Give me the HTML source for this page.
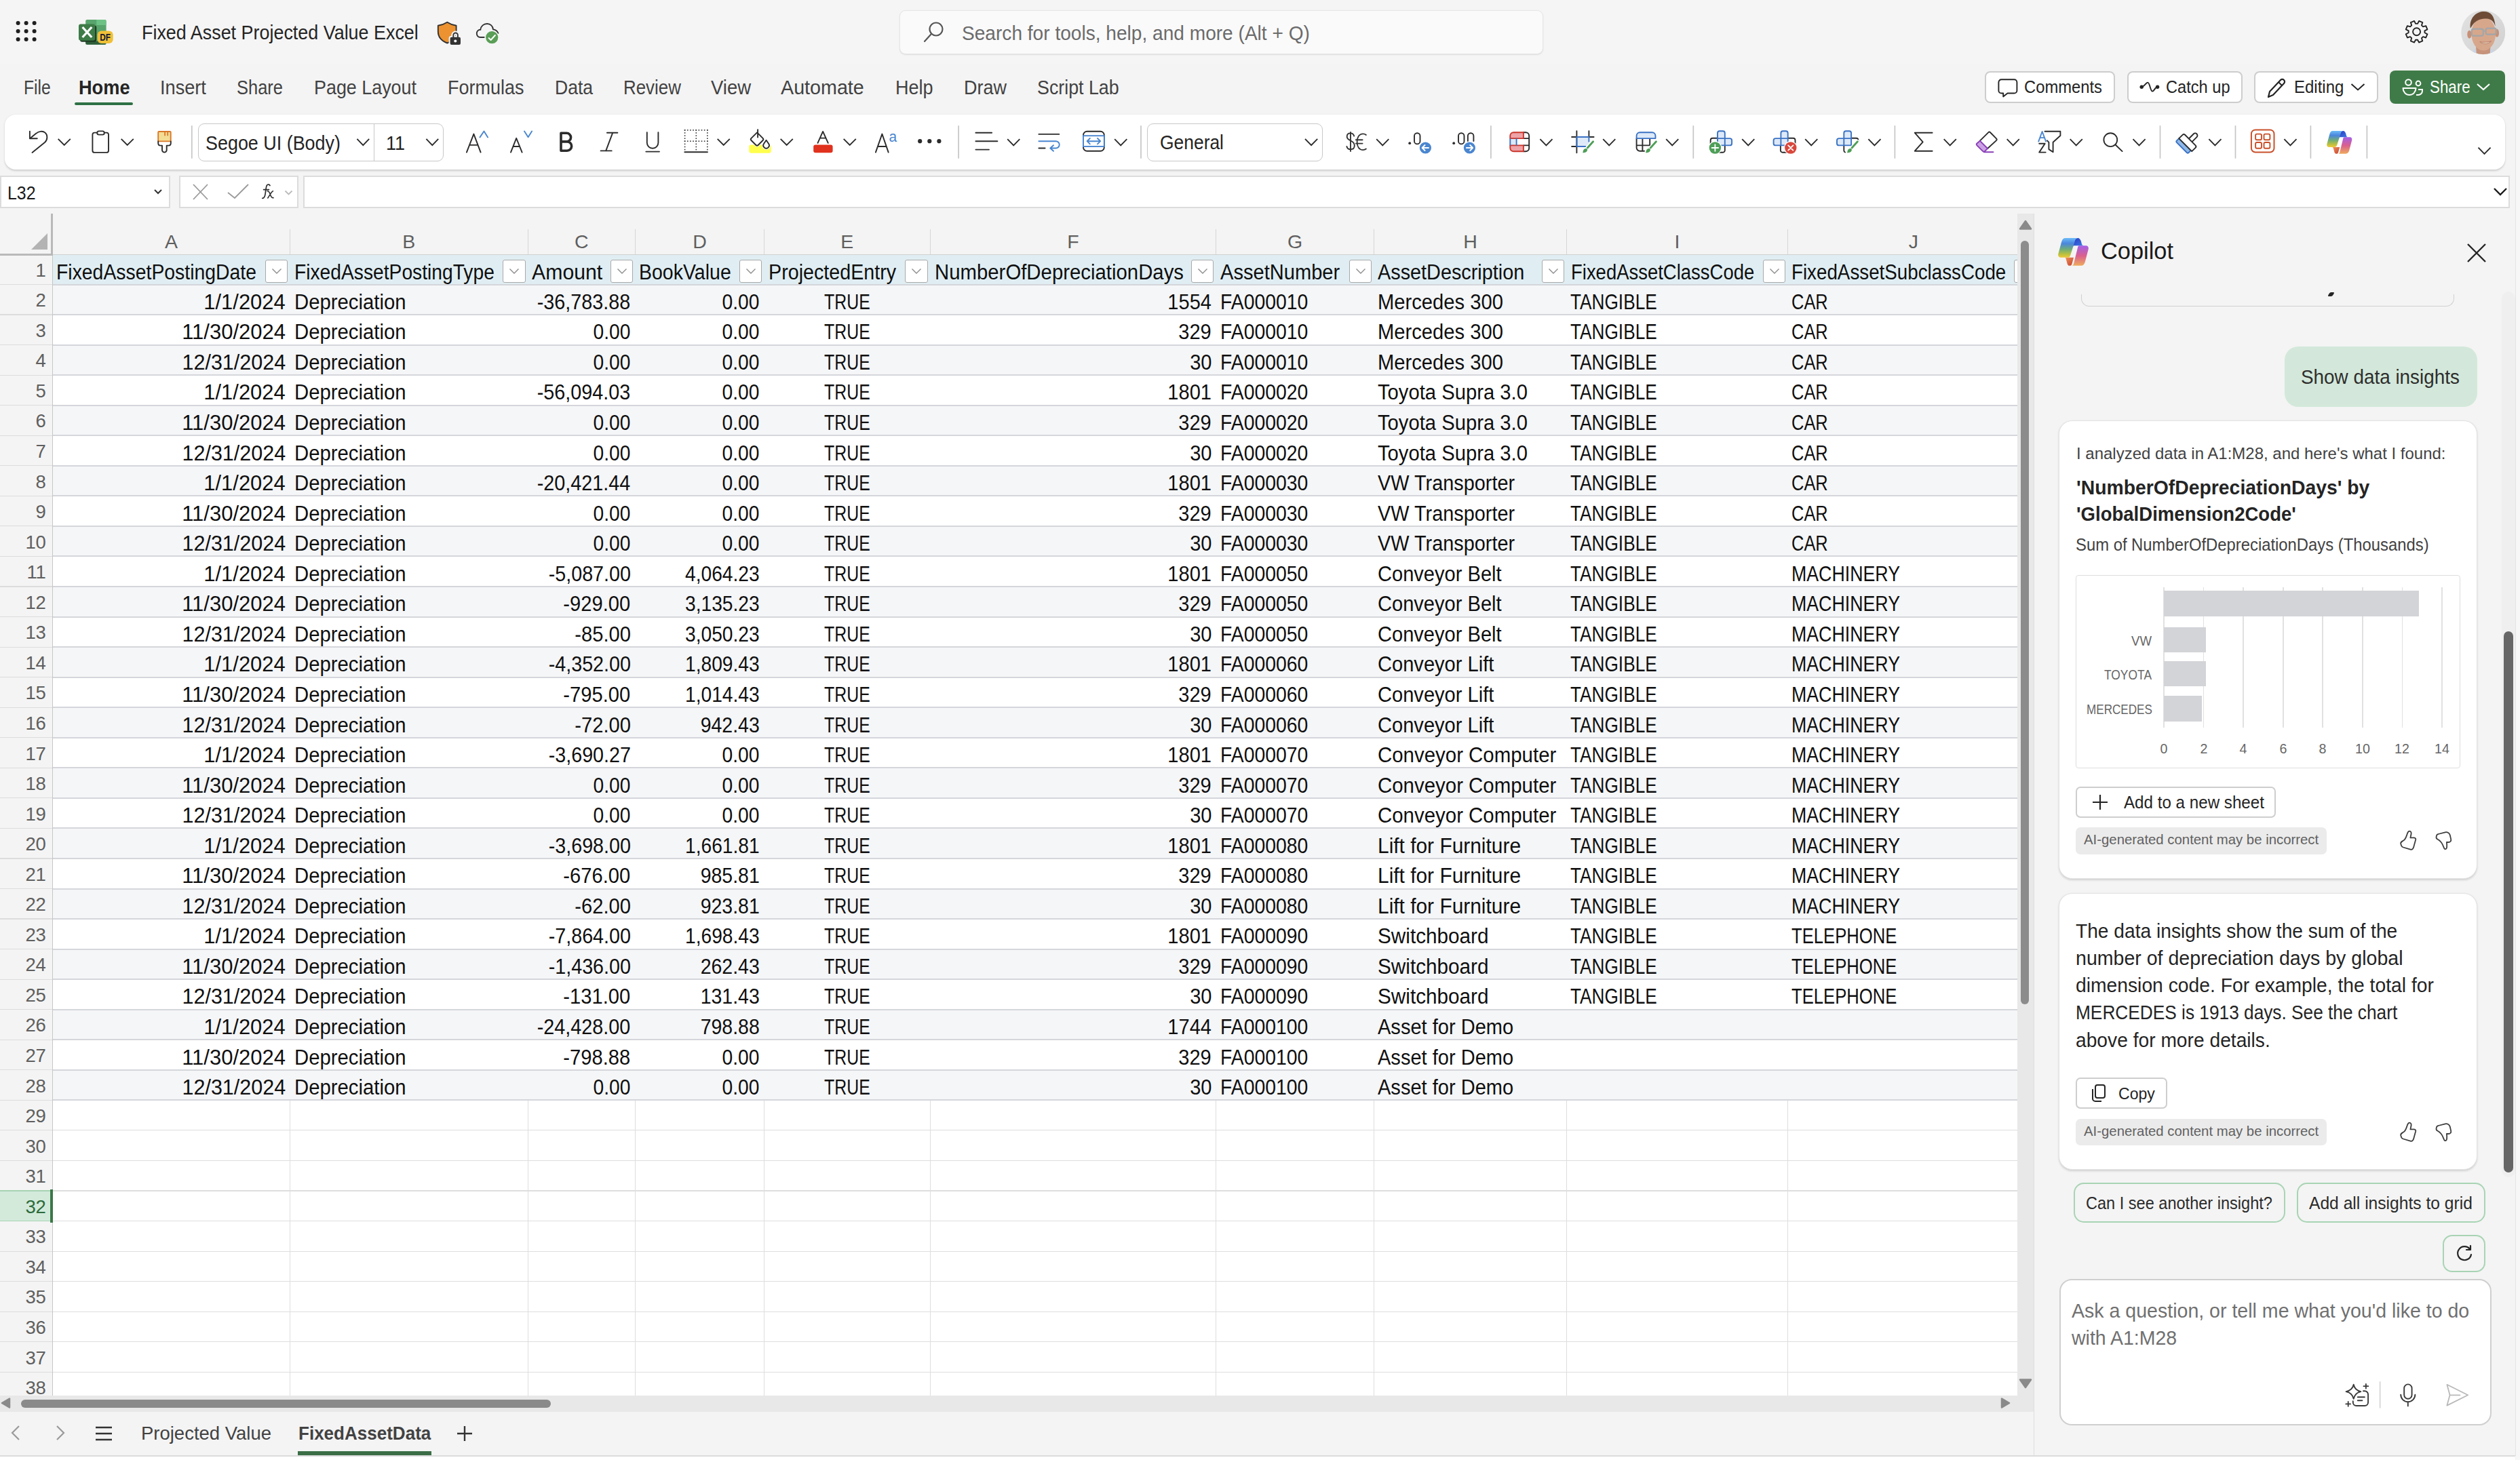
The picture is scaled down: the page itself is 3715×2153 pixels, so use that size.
<!DOCTYPE html><html><head><meta charset="utf-8"><style>
html,body{margin:0;padding:0;}
body{width:3715px;height:2153px;position:relative;overflow:hidden;background:#f4f4f4;font-family:"Liberation Sans", sans-serif;}
.t{position:absolute;white-space:pre;}
.r{position:absolute;}
</style></head><body><div class="r" style="left:0.00px;top:0.00px;width:3708.00px;height:95.00px;background:#f5f5f5;"></div><svg class="r" style="left:0.00px;top:0.00px;" width="80.00" height="95.00" viewBox="0 0 80 95" fill="none"><circle cx="26.6" cy="34" r="3.0" fill="#1f1f1f"/><circle cx="26.6" cy="46" r="3.0" fill="#1f1f1f"/><circle cx="26.6" cy="58" r="3.0" fill="#1f1f1f"/><circle cx="38.6" cy="34" r="3.0" fill="#1f1f1f"/><circle cx="38.6" cy="46" r="3.0" fill="#1f1f1f"/><circle cx="38.6" cy="58" r="3.0" fill="#1f1f1f"/><circle cx="50.6" cy="34" r="3.0" fill="#1f1f1f"/><circle cx="50.6" cy="46" r="3.0" fill="#1f1f1f"/><circle cx="50.6" cy="58" r="3.0" fill="#1f1f1f"/></svg><svg class="r" style="left:112.00px;top:26.00px;" width="58.00" height="44.00" viewBox="0 0 58 44" fill="none">
<rect x="14.2" y="3" width="30.4" height="36.8" rx="2.2" fill="#58a46d"/>
<path d="M30.2 3 h12.2 a2.2 2.2 0 0 1 2.2 2.2 v5.9 h-14.4 z" fill="#6cc285"/>
<path d="M14.2 34.7 h30.4 v2.9 a2.2 2.2 0 0 1 -2.2 2.2 h-26 a2.2 2.2 0 0 1 -2.2 -2.2 z" fill="#2f5e3a"/>
<rect x="6" y="11.4" width="24.2" height="24.3" rx="3" fill="#1d3a22"/>
<rect x="4" y="9.4" width="24.2" height="24.3" rx="3" fill="#3d7b47"/>
<path d="M9.6 14 L23.2 29 M23.2 14 L9.6 29" stroke="#fff" stroke-width="3.3"/>
<rect x="31.6" y="19.6" width="23.1" height="18.4" rx="6" fill="#f0c038"/>
<text x="43.2" y="33.6" font-family="Liberation Sans" font-size="13.8" font-weight="700" fill="#141a33" text-anchor="middle" transform="translate(43.2,0) scale(0.86,1) translate(-43.2,0)">DF</text>
</svg><div class="t" style="top:34.28px;font-size:29.2px;line-height:29.2px;color:#242424;font-weight:400;left:209.00px;transform:scaleX(0.9219);transform-origin:left;">Fixed Asset Projected Value Excel</div><svg class="r" style="left:600px;top:20px" width="150" height="56" viewBox="600 20 150 56" fill="none">
<path d="M659.3 32.7 C655 35.5 650.5 37 645.8 37.8 V46.5 C645.8 55 651.5 60.5 659.3 63.5 C667 60.5 672.6 55 672.6 46.5 V37.8 C668 37 663.6 35.5 659.3 32.7 Z" fill="#ec9230" stroke="#333" stroke-width="1.9" stroke-linejoin="round"/>
<rect x="661.6" y="52.8" width="19.4" height="15.2" rx="4" fill="#f5f5f5"/><path d="M668.3 55 V51.8 A3.3 3.3 0 0 1 674.9 51.8 V55" stroke="#f5f5f5" stroke-width="5.9"/>
<path d="M668.3 55 V51.8 A3.3 3.3 0 0 1 674.9 51.8 V55" stroke="#333" stroke-width="1.9"/>
<rect x="663.6" y="54.8" width="15.4" height="11.2" rx="2.2" fill="#333"/>
<circle cx="671.3" cy="60.4" r="2" fill="#fff"/>
<path d="M713.8 55 H708.2 C704.8 55 702.8 52.3 702.8 49.3 C702.8 46.2 705 43.8 708.3 43.7 C709 38.5 713 35 718.1 35 C723 35 726.6 38.4 727 43.4 C730.4 43.8 733 45.8 734.4 48.8" stroke="#333" stroke-width="1.9" stroke-linecap="round"/>
<circle cx="725.2" cy="55.2" r="10.4" fill="#f5f5f5"/>
<circle cx="725.2" cy="55.2" r="9.1" fill="#5a9e57"/>
<path d="M720.6 56.1 L723.6 59 L729.9 52" stroke="#fff" stroke-width="2" stroke-linecap="round" stroke-linejoin="round"/>
</svg><div class="r" style="box-sizing:border-box;left:1325.50px;top:15.00px;width:949.00px;height:65.00px;border:1px solid #e6e6e6;background:#fafafa;border-radius:9px;box-shadow:0 1px 2px rgba(0,0,0,0.10);"></div><svg class="r" style="left:1360.00px;top:31.00px;" width="34.00" height="32.00" viewBox="0 0 34 32" fill="none"><circle cx="20" cy="12" r="9.5" stroke="#555" stroke-width="2.2"/><path d="M13 19 L3 30" stroke="#555" stroke-width="2.2" stroke-linecap="round"/></svg><div class="t" style="top:33.94px;font-size:29.6px;line-height:29.6px;color:#6b6b6b;font-weight:400;left:1418.00px;transform:scaleX(0.9492);transform-origin:left;">Search for tools, help, and more (Alt + Q)</div><svg class="r" style="left:3540px;top:25px" width="45" height="45" viewBox="3540 25 45 45" fill="none"><path d="M3564.06 34.89 L3566.11 30.98 L3571.30 33.14 L3569.99 37.34 L3572.06 39.41 L3576.26 38.10 L3578.42 43.29 L3574.51 45.34 L3574.51 48.26 L3578.42 50.31 L3576.26 55.50 L3572.06 54.19 L3569.99 56.26 L3571.30 60.46 L3566.11 62.62 L3564.06 58.71 L3561.14 58.71 L3559.09 62.62 L3553.90 60.46 L3555.21 56.26 L3553.14 54.19 L3548.94 55.50 L3546.78 50.31 L3550.69 48.26 L3550.69 45.34 L3546.78 43.29 L3548.94 38.10 L3553.14 39.41 L3555.21 37.34 L3553.90 33.14 L3559.09 30.98 L3561.14 34.89 Z" stroke="#242424" stroke-width="1.9" stroke-linejoin="round"/><circle cx="3562.6" cy="46.8" r="5.5" stroke="#242424" stroke-width="1.9"/></svg><svg class="r" style="left:3627.50px;top:15.00px;" width="65.50" height="65.50" viewBox="0 0 66 66" fill="none"><defs><clipPath id="av"><circle cx="33" cy="33" r="32.7"/></clipPath><linearGradient id="avbg" x1="0" y1="0" x2="1" y2="1"><stop offset="0" stop-color="#e2e2e2"/><stop offset="1" stop-color="#d0d0d0"/></linearGradient></defs>
<g clip-path="url(#av)"><rect width="66" height="66" fill="url(#avbg)"/>
<path d="M14 66 L20 58 L46 58 L54 66 Z" fill="#c9d5e5"/>
<path d="M22 50 L44 50 L43 66 L23 66 Z" fill="#c7937a"/>
<ellipse cx="12.5" cy="36" rx="3.2" ry="6" fill="#c98f76"/><ellipse cx="53.5" cy="34" rx="3" ry="6" fill="#c98f76"/>
<ellipse cx="33.5" cy="35" rx="18" ry="25" fill="#d7a78c"/>
<path d="M14 27 C12 12 22 3 32 2 C43 1 50 7 51 24 C49 17 45 13 38 12.5 C31 12.5 23 14 18 21 Z" fill="#6d4b36"/>
<rect x="16" y="28" width="17" height="10" rx="2.5" stroke="#a6a6a6" stroke-width="2.4" fill="none"/><rect x="37" y="27" width="15" height="9" rx="2.5" stroke="#a6a6a6" stroke-width="2.4" fill="none"/><path d="M33 31 h4" stroke="#a6a6a6" stroke-width="2"/>
<path d="M28 47 C33 51 40 51 45 46 C40 48 33 48 28 47 Z" fill="#efe4c8" stroke="#b57b68" stroke-width="1"/></g></svg><div class="t" style="top:113.69px;font-size:29.9px;line-height:29.9px;color:#424242;font-weight:400;left:35.20px;transform:scaleX(0.8263);transform-origin:left;">File</div><div class="t" style="top:113.69px;font-size:29.9px;line-height:29.9px;color:#242424;font-weight:700;left:116.20px;transform:scaleX(0.9090);transform-origin:left;">Home</div><div class="t" style="top:113.69px;font-size:29.9px;line-height:29.9px;color:#424242;font-weight:400;left:236.40px;transform:scaleX(0.9080);transform-origin:left;">Insert</div><div class="t" style="top:113.69px;font-size:29.9px;line-height:29.9px;color:#424242;font-weight:400;left:349.00px;transform:scaleX(0.8524);transform-origin:left;">Share</div><div class="t" style="top:113.69px;font-size:29.9px;line-height:29.9px;color:#424242;font-weight:400;left:463.00px;transform:scaleX(0.8992);transform-origin:left;">Page Layout</div><div class="t" style="top:113.69px;font-size:29.9px;line-height:29.9px;color:#424242;font-weight:400;left:659.60px;transform:scaleX(0.9027);transform-origin:left;">Formulas</div><div class="t" style="top:113.69px;font-size:29.9px;line-height:29.9px;color:#424242;font-weight:400;left:817.50px;transform:scaleX(0.8880);transform-origin:left;">Data</div><div class="t" style="top:113.69px;font-size:29.9px;line-height:29.9px;color:#424242;font-weight:400;left:918.60px;transform:scaleX(0.8662);transform-origin:left;">Review</div><div class="t" style="top:113.69px;font-size:29.9px;line-height:29.9px;color:#424242;font-weight:400;left:1047.60px;transform:scaleX(0.9200);transform-origin:left;">View</div><div class="t" style="top:113.69px;font-size:29.9px;line-height:29.9px;color:#424242;font-weight:400;left:1151.30px;transform:scaleX(0.9596);transform-origin:left;">Automate</div><div class="t" style="top:113.69px;font-size:29.9px;line-height:29.9px;color:#424242;font-weight:400;left:1320.00px;transform:scaleX(0.9056);transform-origin:left;">Help</div><div class="t" style="top:113.69px;font-size:29.9px;line-height:29.9px;color:#424242;font-weight:400;left:1420.60px;transform:scaleX(0.9020);transform-origin:left;">Draw</div><div class="t" style="top:113.69px;font-size:29.9px;line-height:29.9px;color:#424242;font-weight:400;left:1529.00px;transform:scaleX(0.8967);transform-origin:left;">Script Lab</div><div class="r" style="left:110.00px;top:151.00px;width:86.00px;height:3.50px;background:#2e7044;border-radius:2px;"></div><div class="r" style="box-sizing:border-box;left:2926.00px;top:104.50px;width:192.00px;height:47.50px;border:2px solid #cdcdcd;background:#fff;border-radius:8px;"></div><svg class="r" style="left:2930px;top:110px" width="60" height="40" viewBox="2930 110 60 40" fill="none"><path d="M2950.5 117.3 H2969.3 A4.1 4.1 0 0 1 2973.4 121.4 V133.4 A4.1 4.1 0 0 1 2969.3 137.5 H2959.5 L2953.2 142.4 V137.5 H2950.5 A4.1 4.1 0 0 1 2946.4 133.4 V121.4 A4.1 4.1 0 0 1 2950.5 117.3 Z" stroke="#242424" stroke-width="1.9" stroke-linejoin="round"/></svg><div class="t" style="top:114.57px;font-size:26.5px;line-height:26.5px;color:#242424;font-weight:400;left:2984.00px;transform:scaleX(0.8975);transform-origin:left;">Comments</div><div class="r" style="box-sizing:border-box;left:3135.50px;top:104.50px;width:170.00px;height:47.50px;border:2px solid #cdcdcd;background:#fff;border-radius:8px;"></div><svg class="r" style="left:3150px;top:115px" width="40" height="25" viewBox="3150 115 40 25" fill="none"><circle cx="3157.2" cy="128.3" r="2.7" fill="#242424"/><circle cx="3180.6" cy="128.3" r="2.7" fill="#242424"/><path d="M3157.2 128.3 C3161 128.3 3163.6 121.6 3166.2 121.6 C3169.4 121.6 3169.8 134.6 3173.2 134.6 C3175.8 134.6 3176.8 128.3 3180.6 128.3" stroke="#242424" stroke-width="1.9" stroke-linecap="round"/></svg><div class="t" style="top:114.57px;font-size:26.5px;line-height:26.5px;color:#242424;font-weight:400;left:3193.00px;transform:scaleX(0.8920);transform-origin:left;">Catch up</div><div class="r" style="box-sizing:border-box;left:3323.00px;top:104.50px;width:182.50px;height:47.50px;border:2px solid #cdcdcd;background:#fff;border-radius:8px;"></div><svg class="r" style="left:3339.00px;top:112.50px;" width="32.00" height="33.00" viewBox="0 0 32 33" fill="none"><path d="M5 30 L7 22 L23 5 a3.5 3.5 0 0 1 5 5 L12 27 Z" stroke="#242424" stroke-width="2.2" stroke-linejoin="round"/><path d="M20 8 l5 5" stroke="#242424" stroke-width="2"/></svg><div class="t" style="top:114.57px;font-size:26.5px;line-height:26.5px;color:#242424;font-weight:400;left:3381.70px;transform:scaleX(0.9045);transform-origin:left;">Editing</div><svg class="r" style="left:3465.00px;top:120.50px;" width="22.00" height="14.00" viewBox="0 0 22 14" fill="none"><path d="M1.5 3 L11 11.5 L20.5 3" stroke="#242424" stroke-width="2"/></svg><div class="r" style="left:3522.50px;top:104.00px;width:170.50px;height:48.70px;background:#3f7b48;border-radius:8px;"></div><svg class="r" style="left:3541.00px;top:116.00px;" width="37.00" height="27.00" viewBox="0 0 37 27" fill="none"><circle cx="9.5" cy="5.5" r="4.3" stroke="#fff" stroke-width="2"/><circle cx="24" cy="7" r="3.4" stroke="#fff" stroke-width="2"/><path d="M1.5 14 h19 a0 0 0 0 1 0 0 a9.5 10 0 0 1 -19 0 z" stroke="#fff" stroke-width="2" stroke-linejoin="round"/><path d="M21 24 h3 a6 6 0 0 0 6 -6 v-2 h-6" stroke="#fff" stroke-width="2"/></svg><div class="t" style="top:114.57px;font-size:26.5px;line-height:26.5px;color:#ffffff;font-weight:400;left:3582.00px;transform:scaleX(0.8430);transform-origin:left;">Share</div><svg class="r" style="left:3650.00px;top:121.00px;" width="22.00" height="14.00" viewBox="0 0 22 14" fill="none"><path d="M2 3 L11 11 L20 3" stroke="#fff" stroke-width="2.2"/></svg><div class="r" style="left:7.00px;top:169.00px;width:3686.00px;height:81.00px;background:#ffffff;border-radius:16px;box-shadow:0 1.5px 3px rgba(0,0,0,0.16);"></div><div class="r" style="left:3707.50px;top:0.00px;width:1.50px;height:2147.00px;background:#e4e4e4;"></div><div class="r" style="left:3709.00px;top:0.00px;width:6.00px;height:2153.00px;background:#f7f7f7;"></div><svg class="r" style="left:0;top:160px" width="3715" height="90" viewBox="0 160 3715 90"><path d="M43.9 193.6 V204.3 H54.8" stroke="#2b2b2b" stroke-width="1.9" fill="none" stroke-linejoin="round" stroke-linecap="round" /><path d="M45 203.4 L53.5 196.6 C57 193.6 63 192.6 66.5 195.6 C70.5 199 70.3 206 66.3 209.8 L47.5 224.9" stroke="#2b2b2b" stroke-width="1.9" fill="none" stroke-linejoin="round" stroke-linecap="round" /><path d="M85.70 204.80 L94.70 214.00 L103.80 204.80" stroke="#2b2b2b" stroke-width="1.9" fill="none"/><rect x="136.4" y="195.6" width="23.6" height="29.3" rx="3" stroke="#2b2b2b" stroke-width="1.9" fill="none"/><rect x="143.2" y="193.4" width="10.6" height="5.2" rx="2.6" stroke="#2b2b2b" stroke-width="1.9" fill="#fff"/><path d="M178.70 204.80 L187.70 214.00 L196.80 204.80" stroke="#2b2b2b" stroke-width="1.9" fill="none"/><rect x="233.2" y="194" width="18.5" height="14.4" rx="1" fill="#f3dd95" stroke="#d9782a" stroke-width="1.9"/><path d="M243.1 194 v5.6 M247.2 194 v5.6" stroke="#d9782a" stroke-width="1.8" fill="none" stroke-linejoin="round" stroke-linecap="round" /><path d="M233.2 208.4 V211 C233.2 213 234.5 214.6 236.5 214.6 H239 V221.3 A3.35 3.35 0 0 0 245.7 221.3 V214.6 H248.6 C250.6 214.6 251.8 213 251.8 211 V208.4" stroke="#2b2b2b" stroke-width="1.9" fill="none" stroke-linejoin="round" stroke-linecap="round" /><rect x="281.95" y="185.2" width="1.7" height="48.5" fill="#c6c6c6"/><path d="M687.9 224.6 L698.4 197.6 L708.6 224.6 M692.6 213.9 H704.2" stroke="#2b2b2b" stroke-width="1.9" fill="none" stroke-linejoin="round" stroke-linecap="round" /><path d="M707.5 202.4 L713.5 193.5 L719.1 202.4" stroke="#4a86d0" stroke-width="1.9" fill="none" stroke-linejoin="round" stroke-linecap="round" /><path d="M753 224.6 L761.2 203.8 L769.6 224.6 M757 216 H765.4" stroke="#2b2b2b" stroke-width="1.9" fill="none" stroke-linejoin="round" stroke-linecap="round" /><path d="M773 193.5 L778.6 202.3 L784.1 193.5" stroke="#4a86d0" stroke-width="1.9" fill="none" stroke-linejoin="round" stroke-linecap="round" /><path d="M827 196.3 H835.3 A6.3 6.3 0 0 1 835.3 208.9 H827 Z M827 208.9 H836 A6.65 6.65 0 0 1 836 222.2 H827 Z" stroke="#2b2b2b" stroke-width="3.6" fill="none" stroke-linejoin="round" stroke-linecap="round" /><path d="M894.9 195.8 H910.4 M885.6 222.4 H901.7 M903.2 195.8 L893.2 222.4" stroke="#2b2b2b" stroke-width="1.9" fill="none" stroke-linejoin="round" stroke-linecap="round" /><path d="M953.8 195.2 V210.5 A8.3 8.3 0 0 0 970.4 210.5 V195.2 M952.3 223.6 H972" stroke="#2b2b2b" stroke-width="1.9" fill="none" stroke-linejoin="round" stroke-linecap="round" /><rect x="1008.80" y="191.10" width="1.6" height="1.6" fill="#333"/><rect x="1008.80" y="207.40" width="1.6" height="1.6" fill="#333"/><rect x="1012.95" y="191.10" width="1.6" height="1.6" fill="#333"/><rect x="1012.95" y="207.40" width="1.6" height="1.6" fill="#333"/><rect x="1017.10" y="191.10" width="1.6" height="1.6" fill="#333"/><rect x="1017.10" y="207.40" width="1.6" height="1.6" fill="#333"/><rect x="1021.25" y="191.10" width="1.6" height="1.6" fill="#333"/><rect x="1021.25" y="207.40" width="1.6" height="1.6" fill="#333"/><rect x="1025.40" y="191.10" width="1.6" height="1.6" fill="#333"/><rect x="1025.40" y="207.40" width="1.6" height="1.6" fill="#333"/><rect x="1029.55" y="191.10" width="1.6" height="1.6" fill="#333"/><rect x="1029.55" y="207.40" width="1.6" height="1.6" fill="#333"/><rect x="1033.70" y="191.10" width="1.6" height="1.6" fill="#333"/><rect x="1033.70" y="207.40" width="1.6" height="1.6" fill="#333"/><rect x="1037.85" y="191.10" width="1.6" height="1.6" fill="#333"/><rect x="1037.85" y="207.40" width="1.6" height="1.6" fill="#333"/><rect x="1042.00" y="191.10" width="1.6" height="1.6" fill="#333"/><rect x="1042.00" y="207.40" width="1.6" height="1.6" fill="#333"/><rect x="1008.80" y="191.10" width="1.6" height="1.6" fill="#333"/><rect x="1025.50" y="191.10" width="1.6" height="1.6" fill="#333"/><rect x="1042.00" y="191.10" width="1.6" height="1.6" fill="#333"/><rect x="1008.80" y="195.20" width="1.6" height="1.6" fill="#333"/><rect x="1025.50" y="195.20" width="1.6" height="1.6" fill="#333"/><rect x="1042.00" y="195.20" width="1.6" height="1.6" fill="#333"/><rect x="1008.80" y="199.30" width="1.6" height="1.6" fill="#333"/><rect x="1025.50" y="199.30" width="1.6" height="1.6" fill="#333"/><rect x="1042.00" y="199.30" width="1.6" height="1.6" fill="#333"/><rect x="1008.80" y="203.40" width="1.6" height="1.6" fill="#333"/><rect x="1025.50" y="203.40" width="1.6" height="1.6" fill="#333"/><rect x="1042.00" y="203.40" width="1.6" height="1.6" fill="#333"/><rect x="1008.80" y="207.50" width="1.6" height="1.6" fill="#333"/><rect x="1025.50" y="207.50" width="1.6" height="1.6" fill="#333"/><rect x="1042.00" y="207.50" width="1.6" height="1.6" fill="#333"/><rect x="1008.80" y="211.60" width="1.6" height="1.6" fill="#333"/><rect x="1025.50" y="211.60" width="1.6" height="1.6" fill="#333"/><rect x="1042.00" y="211.60" width="1.6" height="1.6" fill="#333"/><rect x="1008.80" y="215.70" width="1.6" height="1.6" fill="#333"/><rect x="1025.50" y="215.70" width="1.6" height="1.6" fill="#333"/><rect x="1042.00" y="215.70" width="1.6" height="1.6" fill="#333"/><rect x="1008.80" y="219.80" width="1.6" height="1.6" fill="#333"/><rect x="1025.50" y="219.80" width="1.6" height="1.6" fill="#333"/><rect x="1042.00" y="219.80" width="1.6" height="1.6" fill="#333"/><path d="M1009.4 224.2 H1042.9" stroke="#2b2b2b" stroke-width="2.1" fill="none" stroke-linejoin="round" stroke-linecap="round" /><path d="M1057.70 204.80 L1066.70 214.00 L1075.80 204.80" stroke="#2b2b2b" stroke-width="1.9" fill="none"/><path d="M1104.3 216 C1104.3 213.8 1106 213.2 1108 213.5 L1134.5 213.5 C1136.3 213.5 1136.8 215 1136.8 216.5 V222.6 A3.2 3.2 0 0 1 1133.6 225.8 H1107.5 A3.2 3.2 0 0 1 1104.3 222.6 Z" fill="#ffff4d"/><path d="M1116.1 195.6 L1124.8 204.3 A2 2 0 0 1 1124.8 207.1 L1117.4 214.5 A2 2 0 0 1 1114.6 214.5 L1107.2 207.1 A2 2 0 0 1 1107.2 204.3 Z" stroke="#2b2b2b" stroke-width="1.9" fill="#fff" stroke-linejoin="round" stroke-linecap="round" paint-order="stroke"/><path d="M1116.1 193.4 L1126 203.3 A3 3 0 0 1 1126 208.1 L1118.5 215.6 A3 3 0 0 1 1113.7 215.6 L1106.2 208.1 A3 3 0 0 1 1106.2 203.3 Z" fill="#fff"/><path d="M1116.1 195.4 L1124.6 203.9 A2.2 2.2 0 0 1 1124.6 207 L1117.6 214 A2.2 2.2 0 0 1 1114.5 214 L1107.5 207 A2.2 2.2 0 0 1 1107.5 203.9 Z" stroke="#2b2b2b" stroke-width="1.9" fill="none" stroke-linejoin="round" stroke-linecap="round" /><path d="M1117.1 191.2 V202.5" stroke="#2b2b2b" stroke-width="1.9" fill="none" stroke-linejoin="round" stroke-linecap="round" /><circle cx="1129.6" cy="214.5" r="6.2" fill="#fff"/><path d="M1129.6 206.7 L1126 212 A4.3 4.3 0 1 0 1133.2 212 Z" stroke="#2b2b2b" stroke-width="1.9" fill="none" stroke-linejoin="round" stroke-linecap="round" /><path d="M1150.70 204.80 L1159.70 214.00 L1168.80 204.80" stroke="#2b2b2b" stroke-width="1.9" fill="none"/><path d="M1205.5 210.8 L1213.1 193.9 L1220.8 210.8 M1209 203.6 H1217.2" stroke="#2b2b2b" stroke-width="1.9" fill="none" stroke-linejoin="round" stroke-linecap="round" /><rect x="1199.2" y="213.4" width="28.4" height="11.8" rx="3" fill="#e0321e"/><path d="M1243.70 204.80 L1252.70 214.00 L1261.80 204.80" stroke="#2b2b2b" stroke-width="1.9" fill="none"/><path d="M1290.9 224.6 L1300.4 197.6 L1309.7 224.6 M1293.9 216 H1305.8" stroke="#2b2b2b" stroke-width="1.9" fill="none" stroke-linejoin="round" stroke-linecap="round" /><text x="1310.6" y="208.8" font-family="Liberation Sans" font-size="22" fill="#4a86d0" transform="translate(1310.6 0) scale(0.95 1) translate(-1310.6 0)">a</text><circle cx="1356.2" cy="208.2" r="3.1" fill="#2b2b2b"/><circle cx="1370.3" cy="208.2" r="3.1" fill="#2b2b2b"/><circle cx="1384.4" cy="208.2" r="3.1" fill="#2b2b2b"/><rect x="1412.25" y="185.2" width="1.7" height="48.5" fill="#c6c6c6"/><path d="M1438.4 195.8 H1462.1 M1438.4 208.2 H1470.4 M1438.4 220.6 H1458" stroke="#2b2b2b" stroke-width="1.9" fill="none" stroke-linejoin="round" stroke-linecap="round" /><path d="M1485.20 205.10 L1494.20 214.30 L1503.30 205.10" stroke="#2b2b2b" stroke-width="1.9" fill="none"/><path d="M1531.4 197.9 H1561.3 M1531.4 218.5 H1540.6" stroke="#2b2b2b" stroke-width="1.9" fill="none" stroke-linejoin="round" stroke-linecap="round" /><path d="M1531.4 208.2 H1556.6 A5.15 5.15 0 0 1 1556.6 218.5 H1548.5 M1553 214.2 L1548.3 218.5 L1553 222.8" stroke="#4a86d0" stroke-width="1.9" fill="none" stroke-linejoin="round" stroke-linecap="round" /><rect x="1597" y="193.8" width="30.8" height="28.9" rx="5.5" stroke="#2b2b2b" stroke-width="1.9" fill="none"/><rect x="1597" y="200.2" width="30.8" height="15.8" stroke="#4a86d0" stroke-width="1.9" fill="#fff"/><path d="M1602.8 208.2 H1622 M1606.8 204 L1602.6 208.2 L1606.8 212.4 M1618 204 L1622.2 208.2 L1618 212.4" stroke="#4a86d0" stroke-width="1.9" fill="none" stroke-linejoin="round" stroke-linecap="round" /><path d="M1643.20 205.10 L1652.20 214.30 L1661.30 205.10" stroke="#2b2b2b" stroke-width="1.9" fill="none"/><rect x="1681.15" y="185.2" width="1.7" height="48.5" fill="#c6c6c6"/><path d="M1996.2 200.6 C1995.3 197.7 1993.4 196.4 1991 196.4 C1987.6 196.4 1985.7 198.6 1985.7 201.4 C1985.7 204.6 1988.1 205.9 1991.1 207.3 C1994.6 209 1996.8 210.8 1996.8 214.5 C1996.8 218.1 1994.5 220.3 1991 220.3 C1988 220.3 1986 218.8 1985.4 216 M1991 194.9 V223.1" stroke="#333" stroke-width="1.9" fill="none" stroke-linejoin="round" stroke-linecap="round" /><path d="M2013.9 198.9 C2012.6 197.9 2011.1 197.4 2009.4 197.4 C2003.6 197.4 2000.6 202.6 2000.6 209.2 C2000.6 216 2003.6 221.1 2009.4 221.1 C2011.1 221.1 2012.6 220.6 2013.9 219.6 M1998.9 206.3 H2008.6 M1998.9 211.6 H2008.6" stroke="#333" stroke-width="1.9" fill="none" stroke-linejoin="round" stroke-linecap="round" /><path d="M2029.20 205.10 L2038.20 214.30 L2047.30 205.10" stroke="#2b2b2b" stroke-width="1.9" fill="none"/><circle cx="2078.2" cy="211.2" r="1.9" fill="#2b2b2b"/><rect x="2085" y="196.2" width="8.5" height="16.2" rx="4.25" stroke="#2b2b2b" stroke-width="1.9" fill="none"/><circle cx="2101.4" cy="218" r="9.6" fill="#fff"/><circle cx="2101.4" cy="218" r="8.6" fill="#4a86d0"/><path d="M2106 218 H2096.8 M2100.6 214 L2096.6 218 L2100.6 222" stroke="#fff" stroke-width="1.8" fill="none" stroke-linejoin="round" stroke-linecap="round" /><circle cx="2143.2" cy="211.2" r="1.9" fill="#2b2b2b"/><rect x="2150" y="196.2" width="8.5" height="16.2" rx="4.25" stroke="#2b2b2b" stroke-width="1.9" fill="none"/><path d="M2163.9 208 V200.5 A4.25 4.25 0 0 1 2172.4 200.5 V208" stroke="#2b2b2b" stroke-width="1.9" fill="none" stroke-linejoin="round" stroke-linecap="round" /><circle cx="2166.4" cy="218" r="9.6" fill="#fff"/><circle cx="2166.4" cy="218" r="8.6" fill="#4a86d0"/><path d="M2161.8 218 H2171 M2167.2 214 L2171.2 218 L2167.2 222" stroke="#fff" stroke-width="1.8" fill="none" stroke-linejoin="round" stroke-linecap="round" /><rect x="2197.05" y="185.2" width="1.7" height="48.5" fill="#c6c6c6"/><path d="M2245.9 195.3 H2231.3 A5 5 0 0 0 2226.3 200.3 V204.1 H2245.9 Z" fill="#eea3a8"/><path d="M2245.9 223.2 H2231.3 A5 5 0 0 1 2226.3 218.2 V214.4 H2245.9 Z" fill="#eea3a8"/><rect x="2226.3" y="204.1" width="9.3" height="10.3" fill="#dde9f8"/><path d="M2245.9 195.3 H2249.2 A5 5 0 0 1 2254.2 200.3 V218.2 A5 5 0 0 1 2249.2 223.2 H2245.9 M2245.9 204.1 H2254.2 M2245.9 214.4 H2254.2" stroke="#2b2b2b" stroke-width="1.9" fill="none" stroke-linejoin="round" stroke-linecap="round" /><path d="M2245.9 195.3 H2231.3 A5 5 0 0 0 2226.3 200.3 V204.1 H2245.9 Z M2245.9 223.2 H2231.3 A5 5 0 0 1 2226.3 218.2 V214.4 H2245.9 Z" stroke="#c9352a" stroke-width="1.9" fill="none" stroke-linejoin="round" stroke-linecap="round" /><path d="M2226.3 204.6 V213.9 M2235.6 204.6 V213.9" stroke="#3a72c4" stroke-width="1.9" fill="none" stroke-linejoin="round" stroke-linecap="round" /><path d="M2270.40 205.10 L2279.40 214.30 L2288.50 205.10" stroke="#2b2b2b" stroke-width="1.9" fill="none"/><rect x="2324.4" y="202" width="18" height="14" fill="#dfeaf8"/><path d="M2324.4 193.3 V225.2 M2342.4 193.3 V201.5 M2317.1 202 H2349.6 M2317.1 216 H2323.8" stroke="#2b2b2b" stroke-width="1.9" fill="none" stroke-linejoin="round" stroke-linecap="round" /><path d="M2324.4 202 V216 H2337.3 M2324.4 202 H2342.4 V208.7" stroke="#3a72c4" stroke-width="1.9" fill="none" stroke-linejoin="round" stroke-linecap="round" /><path d="M2348.6 208.7 L2340.3 218" stroke="#fff" stroke-width="5.5" stroke-linecap="round"/><path d="M2348.6 208.7 L2340.3 218" stroke="#4e9e57" stroke-width="2.8" fill="none" stroke-linejoin="round" stroke-linecap="round" /><path d="M2338.8 219 C2335 218.8 2333.6 221.6 2333.4 225.4 C2337 225.4 2339.9 224.3 2340.2 220.6 Z" fill="#4e9e57"/><path d="M2363.20 205.10 L2372.20 214.30 L2381.30 205.10" stroke="#2b2b2b" stroke-width="1.9" fill="none"/><path d="M2412.6 204.1 V217.7 A5 5 0 0 0 2417.6 222.7 H2424 M2421.4 204.1 V222.7 M2412.6 214.4 H2432.2 V204.1" stroke="#2b2b2b" stroke-width="1.9" fill="none" stroke-linejoin="round" stroke-linecap="round" /><path d="M2412.6 204.1 V200.3 A5 5 0 0 1 2417.6 195.3 H2435.5 A5 5 0 0 1 2440.5 200.3 V204.1 Z" fill="#dde9f8" stroke="#3a72c4" stroke-width="1.9" stroke-linejoin="round"/><path d="M2441.5 208.7 L2433.2 218" stroke="#fff" stroke-width="5.5" stroke-linecap="round"/><path d="M2441.5 208.7 L2433.2 218" stroke="#4e9e57" stroke-width="2.8" fill="none" stroke-linejoin="round" stroke-linecap="round" /><path d="M2431.7 219 C2427.9 218.8 2426.5 221.6 2426.3 225.4 C2429.9 225.4 2432.8 224.3 2433.1 220.6 Z" fill="#4e9e57"/><path d="M2456.20 205.10 L2465.20 214.30 L2474.30 205.10" stroke="#2b2b2b" stroke-width="1.9" fill="none"/><rect x="2495.45" y="185.2" width="1.7" height="48.5" fill="#c6c6c6"/><path d="M2532 203.8 H2524.7 A3 3 0 0 0 2521.7 206.8 V221.7 A3 3 0 0 0 2524.7 224.7 H2539.8 A3 3 0 0 0 2542.8 221.7 V214.4" stroke="#2b2b2b" stroke-width="1.9" fill="none" stroke-linejoin="round" stroke-linecap="round" /><rect x="2532.00" y="193.40" width="10.6" height="10.5" fill="#dde9f8"/><rect x="2532.00" y="204.00" width="10.6" height="10.5" fill="#dde9f8"/><rect x="2542.60" y="204.00" width="10.6" height="10.5" fill="#dde9f8"/><path d="M2535 193.3 H2539.8 A3 3 0 0 1 2542.8 196.3 V204.1 H2550.1 A3 3 0 0 1 2553.1 207.1 V211.4 A3 3 0 0 1 2550.1 214.4 H2532 V196.3 A3 3 0 0 1 2535 193.3 Z M2532 204.1 H2542.8 V214.4" stroke="#3a72c4" stroke-width="1.9" fill="none" stroke-linejoin="round" stroke-linecap="round" /><circle cx="2528.4" cy="218" r="10" fill="#fff"/><circle cx="2528.4" cy="218" r="8.7" fill="#4e9e57"/><path d="M2528.4 213.2 V222.8 M2523.6 218 H2533.2" stroke="#fff" stroke-width="1.8" fill="none" stroke-linejoin="round" stroke-linecap="round" /><path d="M2568.20 205.10 L2577.20 214.30 L2586.30 205.10" stroke="#2b2b2b" stroke-width="1.9" fill="none"/><path d="M2635.7 203.8 H2643.5 A3 3 0 0 1 2646.5 206.8 V221.7 A3 3 0 0 1 2643.5 224.7 H2627.9 A3 3 0 0 1 2624.9 221.7 V214.4" stroke="#2b2b2b" stroke-width="1.9" fill="none" stroke-linejoin="round" stroke-linecap="round" /><rect x="2625.20" y="193.40" width="10.6" height="10.5" fill="#dde9f8"/><rect x="2614.60" y="204.00" width="10.6" height="10.5" fill="#dde9f8"/><rect x="2625.20" y="204.00" width="10.6" height="10.5" fill="#dde9f8"/><path d="M2628.4 193.3 H2632.7 A3 3 0 0 1 2635.7 196.3 V214.4 H2617.6 A3 3 0 0 1 2614.6 211.4 V207.1 A3 3 0 0 1 2617.6 204.1 H2625.4 V196.3 A3 3 0 0 1 2628.4 193.3 Z M2625.4 204.1 V214.4 M2625.4 204.1 H2635.7" stroke="#3a72c4" stroke-width="1.9" fill="none" stroke-linejoin="round" stroke-linecap="round" /><circle cx="2639.8" cy="218" r="10" fill="#fff"/><circle cx="2639.8" cy="218" r="8.7" fill="#d9473b"/><path d="M2636.2 214.4 L2643.4 221.6 M2643.4 214.4 L2636.2 221.6" stroke="#fff" stroke-width="1.8" fill="none" stroke-linejoin="round" stroke-linecap="round" /><path d="M2661.20 205.10 L2670.20 214.30 L2679.30 205.10" stroke="#2b2b2b" stroke-width="1.9" fill="none"/><path d="M2729.1 203.8 H2736.4 A3 3 0 0 1 2739.4 206.8 V208 M2718.3 214.4 V221.7 A3 3 0 0 0 2720 224.5" stroke="#2b2b2b" stroke-width="1.9" fill="none" stroke-linejoin="round" stroke-linecap="round" /><rect x="2718.50" y="193.40" width="10.6" height="10.5" fill="#dde9f8"/><rect x="2708.00" y="204.00" width="10.6" height="10.5" fill="#dde9f8"/><rect x="2718.50" y="204.00" width="10.6" height="10.5" fill="#dde9f8"/><path d="M2721.3 193.3 H2726.1 A3 3 0 0 1 2729.1 196.3 V214.4 H2711 A3 3 0 0 1 2708 211.4 V207.1 A3 3 0 0 1 2711 204.1 H2718.3 V196.3 A3 3 0 0 1 2721.3 193.3 Z M2718.3 204.1 V214.4 M2718.3 204.1 H2729.1" stroke="#3a72c4" stroke-width="1.9" fill="none" stroke-linejoin="round" stroke-linecap="round" /><path d="M2738.4 208.7 L2730.1 218" stroke="#fff" stroke-width="5.5" stroke-linecap="round"/><path d="M2738.4 208.7 L2730.1 218" stroke="#4e9e57" stroke-width="2.8" fill="none" stroke-linejoin="round" stroke-linecap="round" /><path d="M2728.6 219 C2724.8 218.8 2723.4 221.6 2723.2 225.4 C2726.8 225.4 2729.7 224.3 2730 220.6 Z" fill="#4e9e57"/><path d="M2754.40 205.10 L2763.40 214.30 L2772.50 205.10" stroke="#2b2b2b" stroke-width="1.9" fill="none"/><rect x="2792.55" y="185.2" width="1.7" height="48.5" fill="#c6c6c6"/><path d="M2848.6 195.8 H2822.8 L2834.7 209.3 L2822.8 222.7 H2848.6" stroke="#2b2b2b" stroke-width="1.9" fill="none" stroke-linejoin="round" stroke-linecap="round" /><path d="M2865.70 205.10 L2874.70 214.30 L2883.80 205.10" stroke="#2b2b2b" stroke-width="1.9" fill="none"/><path d="M2918.8 207.7 L2931.2 195.3 A2 2 0 0 1 2934 195.3 L2943 204.3 A2 2 0 0 1 2943 207.1 L2930.1 219" stroke="#2b2b2b" stroke-width="1.9" fill="none" stroke-linejoin="round" stroke-linecap="round" /><path d="M2918.8 207.7 L2930.1 219 L2926 223.1 A2 2 0 0 1 2923.2 223.1 L2914.4 214.3 A2 2 0 0 1 2914.4 211.5 Z" fill="#caa1e2" stroke="#8a3fb8" stroke-width="1.9" stroke-linejoin="round"/><path d="M2925 224.2 H2938.4" stroke="#8a3fb8" stroke-width="1.9" fill="none" stroke-linejoin="round" stroke-linecap="round" /><path d="M2958.70 205.10 L2967.70 214.30 L2976.80 205.10" stroke="#2b2b2b" stroke-width="1.9" fill="none"/><path d="M3005.2 208.6 L3010.6 194 L3016.1 208.6 M3007.6 203.1 H3013.9" stroke="#4a86d0" stroke-width="1.9" fill="none" stroke-linejoin="round" stroke-linecap="round" /><path d="M3006.2 211.8 H3014.7 L3006.2 224.6 H3015.7" stroke="#2b2b2b" stroke-width="1.9" fill="none" stroke-linejoin="round" stroke-linecap="round" /><path d="M3014.5 193.8 H3037.4 V200 L3026.6 209.8 V224.2 L3020.4 220.1 V209.8 L3018 207.3" stroke="#2b2b2b" stroke-width="1.9" fill="none" stroke-linejoin="round" stroke-linecap="round" /><path d="M3051.70 205.10 L3060.70 214.30 L3069.80 205.10" stroke="#2b2b2b" stroke-width="1.9" fill="none"/><circle cx="3111.3" cy="206.2" r="9.9" stroke="#2b2b2b" stroke-width="1.9" fill="none"/><path d="M3118.6 213.5 L3128.6 223.1" stroke="#2b2b2b" stroke-width="1.9" fill="none" stroke-linejoin="round" stroke-linecap="round" /><path d="M3144.50 205.10 L3153.50 214.30 L3162.60 205.10" stroke="#2b2b2b" stroke-width="1.9" fill="none"/><rect x="3183.65" y="185.2" width="1.7" height="48.5" fill="#c6c6c6"/><path d="M3212.2 204.2 L3229.8 221.8 L3226.6 225 A2 2 0 0 1 3223.8 225 L3209 210.2 A2 2 0 0 1 3209 207.4 Z" fill="#8fb8e8" stroke="#3a72c4" stroke-width="1.9" stroke-linejoin="round"/><path d="M3226.8 204.5 L3233.8 197.5 A3.3 3.3 0 0 1 3238.5 202.2 L3231.5 209.2" stroke="#2b2b2b" stroke-width="1.9" fill="#fff" stroke-linejoin="round" stroke-linecap="round" /><path d="M3212.2 204.2 L3217.6 198.8 A2.5 2.5 0 0 1 3221.1 198.8 L3236.6 214.3 A2.5 2.5 0 0 1 3236.6 217.8 L3231.2 223.2 Z" stroke="#2b2b2b" stroke-width="1.9" fill="#fff" stroke-linejoin="round" stroke-linecap="round" /><path d="M3256.40 205.10 L3265.40 214.30 L3274.50 205.10" stroke="#2b2b2b" stroke-width="1.9" fill="none"/><rect x="3294.65" y="185.2" width="1.7" height="48.5" fill="#c6c6c6"/><rect x="3318.9" y="191.4" width="33.6" height="33.1" rx="6" stroke="#c9502a" stroke-width="2" fill="none"/><rect x="3325.1" y="197.6" width="8.9" height="8.7" rx="2" stroke="#c9502a" stroke-width="1.9" fill="none"/><rect x="3337.5" y="197.6" width="8.9" height="8.7" rx="2" stroke="#c9502a" stroke-width="1.9" fill="none"/><rect x="3325.1" y="210" width="8.9" height="8.7" rx="2" stroke="#c9502a" stroke-width="1.9" fill="none"/><rect x="3337.5" y="210" width="8.9" height="8.7" rx="2" stroke="#c9502a" stroke-width="1.9" fill="none"/><path d="M3367.40 205.10 L3376.40 214.30 L3385.50 205.10" stroke="#2b2b2b" stroke-width="1.9" fill="none"/><rect x="3405.55" y="185.2" width="1.7" height="48.5" fill="#c6c6c6"/><rect x="3488.55" y="185.2" width="1.7" height="48.5" fill="#c6c6c6"/><path d="M3653.50 217.60 L3662.50 226.80 L3671.60 217.60" stroke="#2b2b2b" stroke-width="1.9" fill="none"/></svg><div class="r" style="box-sizing:border-box;left:292.00px;top:182.00px;width:362.00px;height:55.50px;border:1.8px solid #c8c8c8;background:#fff;border-radius:9px;"></div><div class="r" style="left:550.50px;top:183.00px;width:1.50px;height:53.50px;background:#c8c8c8;"></div><div class="t" style="top:195.77px;font-size:29.8px;line-height:29.8px;color:#242424;font-weight:400;left:303.00px;transform:scaleX(0.9033);transform-origin:left;">Segoe UI (Body)</div><div class="t" style="top:195.77px;font-size:29.8px;line-height:29.8px;color:#242424;font-weight:400;left:569.00px;transform:scaleX(0.9052);transform-origin:left;">11</div><div class="r" style="box-sizing:border-box;left:1691.00px;top:182.00px;width:259.00px;height:55.50px;border:1.8px solid #c8c8c8;background:#fff;border-radius:9px;"></div><div class="t" style="top:195.27px;font-size:29.8px;line-height:29.8px;color:#242424;font-weight:400;left:1710.00px;transform:scaleX(0.8866);transform-origin:left;">General</div><svg class="r" style="left:0;top:160px" width="3715" height="90" viewBox="0 160 3715 90"><path d="M526.4 204.8 L535.3 214.1 L544.2 204.8 M628.4 204.8 L637.3 214.1 L646.2 204.8 M1924 204.8 L1933.1 214.1 L1942.2 204.8" stroke="#2b2b2b" stroke-width="1.9" fill="none"/></svg><svg class="r" style="left:3430.00px;top:192.60px;" width="37.60" height="34.00" viewBox="0 0 45 41" fill="none"><defs><linearGradient id="cg1" x1="0" y1="0" x2="0" y2="1"><stop offset="0" stop-color="#6cbcf8"/><stop offset="0.28" stop-color="#4a86dd"/><stop offset="0.58" stop-color="#70ad78"/><stop offset="0.82" stop-color="#b8c040"/><stop offset="1" stop-color="#f0c93a"/></linearGradient>
<linearGradient id="cg2" x1="0" y1="0" x2="0" y2="1"><stop offset="0" stop-color="#a45fe8"/><stop offset="0.5" stop-color="#d9608e"/><stop offset="1" stop-color="#efab5c"/></linearGradient>
<linearGradient id="cg3" x1="0" y1="0" x2="1" y2="1"><stop offset="0" stop-color="#2a35c4"/><stop offset="1" stop-color="#3f86e6"/></linearGradient>
<linearGradient id="cg4" x1="0" y1="0" x2="1" y2="1"><stop offset="0" stop-color="#f0945a"/><stop offset="1" stop-color="#c5402f"/></linearGradient></defs>
<path d="M24 4 C25 1 27 0 29 0 C31.5 0 33 2 34 5 L35 9 C35.5 10.5 36.5 11.2 38.5 11.2 L23 11.2 L21.5 13 Z" fill="url(#cg3)"/>
<path d="M10 28.8 H23 L20.5 38 C20 40 19 40.8 17 40.8 C15 40.8 14 39.5 13.5 37.5 L12 32 C11.5 30 11 28.8 10 28.8 Z" fill="url(#cg4)"/>
<path d="M10 0 H30 C27 0 25.5 2 25 4 L18 26 C17.3 28 16 28.8 14 28.8 H4 C1 28.8 -0.3 26.5 0.3 23.5 L5 6 C6 2 8 0 10 0 Z" fill="url(#cg1)"/>
<path d="M31 11.2 H41 C44 11.2 45.3 13.5 44.7 16.5 L40 34.5 C39 38.5 37 40.8 34 40.8 H20 C22 40.8 22.8 39 23.3 37 L29 14 C29.5 12 30 11.2 31 11.2 Z" fill="url(#cg2)"/></svg><div class="r" style="box-sizing:border-box;left:0.00px;top:258.50px;width:250.50px;height:48.00px;border:2px solid #dcdcdc;background:#fff;border-radius:0px;"></div><div class="t" style="top:271.30px;font-size:28px;line-height:28px;color:#1a1a1a;font-weight:400;left:11.00px;transform:scaleX(0.8886);transform-origin:left;">L32</div><svg class="r" style="left:226.00px;top:278.00px;" width="14.00" height="9.00" viewBox="0 0 14 9" fill="none"><path d="M2 2 L7 7 L12 2" stroke="#333" stroke-width="2"/></svg><div class="r" style="box-sizing:border-box;left:264.00px;top:258.50px;width:175.50px;height:48.00px;border:2px solid #dcdcdc;background:#fff;border-radius:0px;"></div><svg class="r" style="left:283.00px;top:270.00px;" width="25.00" height="26.00" viewBox="0 0 25 26" fill="none"><path d="M2 2 L23 24 M23 2 L2 24" stroke="#9a9a9a" stroke-width="1.8"/></svg><svg class="r" style="left:334.00px;top:270.00px;" width="34.00" height="24.00" viewBox="0 0 34 24" fill="none"><path d="M2 14 L12 22 L32 2" stroke="#9a9a9a" stroke-width="1.8" fill="none"/></svg><svg class="r" style="left:380px;top:265px" width="30" height="32" viewBox="380 265 30 32" fill="none"><path d="M398 273.6 C397.2 271.9 394.6 271.6 393.4 273.3 C392.3 274.9 391.9 279.6 391.2 285.2 C390.6 290 389.3 292.6 386.8 292.4 M388.6 279.6 H396.4" stroke="#2b2b2b" stroke-width="1.7" stroke-linecap="round"/><path d="M394.2 281.8 C396.6 281.6 397.6 284.4 398.6 287.2 C399.6 290 400.6 292.2 403 291.6 M402.4 281.8 C400.2 282.6 397.4 288.4 394.8 292" stroke="#2b2b2b" stroke-width="1.6" stroke-linecap="round"/></svg><svg class="r" style="left:419.00px;top:280.00px;" width="13.00" height="8.00" viewBox="0 0 13 8" fill="none"><path d="M1.5 1.5 L6.5 6.5 L11.5 1.5" stroke="#bbb" stroke-width="1.8"/></svg><div class="r" style="box-sizing:border-box;left:447.00px;top:258.50px;width:3253.00px;height:48.00px;border:2px solid #dcdcdc;background:#fff;border-radius:0px;"></div><svg class="r" style="left:3675.00px;top:276.00px;" width="22.00" height="14.00" viewBox="0 0 22 14" fill="none"><path d="M2 2 L11 11 L20 2" stroke="#1a1a1a" stroke-width="2.4"/></svg><div class="t" style="top:342.12px;font-size:28.5px;line-height:28.5px;color:#5f5f5f;font-weight:400;left:-347.50px;width:1200px;text-align:center;">A</div><div class="t" style="top:342.12px;font-size:28.5px;line-height:28.5px;color:#5f5f5f;font-weight:400;left:2.88px;width:1200px;text-align:center;">B</div><div class="r" style="left:426.75px;top:337.50px;width:1.50px;height:38.00px;background:#d6d6d6;"></div><div class="t" style="top:342.12px;font-size:28.5px;line-height:28.5px;color:#5f5f5f;font-weight:400;left:257.38px;width:1200px;text-align:center;">C</div><div class="r" style="left:777.50px;top:337.50px;width:1.50px;height:38.00px;background:#d6d6d6;"></div><div class="t" style="top:342.12px;font-size:28.5px;line-height:28.5px;color:#5f5f5f;font-weight:400;left:431.50px;width:1200px;text-align:center;">D</div><div class="r" style="left:935.75px;top:337.50px;width:1.50px;height:38.00px;background:#d6d6d6;"></div><div class="t" style="top:342.12px;font-size:28.5px;line-height:28.5px;color:#5f5f5f;font-weight:400;left:648.88px;width:1200px;text-align:center;">E</div><div class="r" style="left:1125.75px;top:337.50px;width:1.50px;height:38.00px;background:#d6d6d6;"></div><div class="t" style="top:342.12px;font-size:28.5px;line-height:28.5px;color:#5f5f5f;font-weight:400;left:981.88px;width:1200px;text-align:center;">F</div><div class="r" style="left:1370.50px;top:337.50px;width:1.50px;height:38.00px;background:#d6d6d6;"></div><div class="t" style="top:342.12px;font-size:28.5px;line-height:28.5px;color:#5f5f5f;font-weight:400;left:1309.00px;width:1200px;text-align:center;">G</div><div class="r" style="left:1791.75px;top:337.50px;width:1.50px;height:38.00px;background:#d6d6d6;"></div><div class="t" style="top:342.12px;font-size:28.5px;line-height:28.5px;color:#5f5f5f;font-weight:400;left:1567.50px;width:1200px;text-align:center;">H</div><div class="r" style="left:2024.75px;top:337.50px;width:1.50px;height:38.00px;background:#d6d6d6;"></div><div class="t" style="top:342.12px;font-size:28.5px;line-height:28.5px;color:#5f5f5f;font-weight:400;left:1872.50px;width:1200px;text-align:center;">I</div><div class="r" style="left:2308.75px;top:337.50px;width:1.50px;height:38.00px;background:#d6d6d6;"></div><div class="t" style="top:342.12px;font-size:28.5px;line-height:28.5px;color:#5f5f5f;font-weight:400;left:2220.75px;width:1200px;text-align:center;">J</div><div class="r" style="left:2634.75px;top:337.50px;width:1.50px;height:38.00px;background:#d6d6d6;"></div><div class="r" style="left:75.00px;top:315.00px;width:3.00px;height:61.50px;background:#b9b9b9;"></div><div class="r" style="left:0.00px;top:373.50px;width:78.00px;height:3.00px;background:#b9b9b9;"></div><svg class="r" style="left:44.00px;top:342.00px;" width="28.00" height="28.00" viewBox="0 0 28 28" fill="none"><path d="M26 2 L26 26 L2 26 Z" fill="#b3b3b3"/></svg><div class="r" style="left:77.50px;top:374.50px;width:2896.00px;height:1.50px;background:#cfcfcf;"></div><div class="r" style="left:77.50px;top:376.00px;width:2896.00px;height:1682.00px;background:#ffffff;"></div><div class="r" style="left:0.00px;top:376.50px;width:77.50px;height:1681.50px;background:#f4f4f4;"></div><div class="r" style="left:77.50px;top:376.00px;width:2896.00px;height:43.50px;background:#e0eef3;"></div><div class="r" style="left:77.50px;top:419.50px;width:2896.00px;height:44.55px;background:#f5f6f8;"></div><div class="r" style="left:77.50px;top:508.60px;width:2896.00px;height:44.55px;background:#f5f6f8;"></div><div class="r" style="left:77.50px;top:597.70px;width:2896.00px;height:44.55px;background:#f5f6f8;"></div><div class="r" style="left:77.50px;top:686.80px;width:2896.00px;height:44.55px;background:#f5f6f8;"></div><div class="r" style="left:77.50px;top:775.90px;width:2896.00px;height:44.55px;background:#f5f6f8;"></div><div class="r" style="left:77.50px;top:865.00px;width:2896.00px;height:44.55px;background:#f5f6f8;"></div><div class="r" style="left:77.50px;top:954.10px;width:2896.00px;height:44.55px;background:#f5f6f8;"></div><div class="r" style="left:77.50px;top:1043.20px;width:2896.00px;height:44.55px;background:#f5f6f8;"></div><div class="r" style="left:77.50px;top:1132.30px;width:2896.00px;height:44.55px;background:#f5f6f8;"></div><div class="r" style="left:77.50px;top:1221.40px;width:2896.00px;height:44.55px;background:#f5f6f8;"></div><div class="r" style="left:77.50px;top:1310.50px;width:2896.00px;height:44.55px;background:#f5f6f8;"></div><div class="r" style="left:77.50px;top:1399.60px;width:2896.00px;height:44.55px;background:#f5f6f8;"></div><div class="r" style="left:77.50px;top:1488.70px;width:2896.00px;height:44.55px;background:#f5f6f8;"></div><div class="r" style="left:77.50px;top:1577.80px;width:2896.00px;height:44.55px;background:#f5f6f8;"></div><div class="r" style="left:77.50px;top:418.50px;width:2896.00px;height:2.00px;background:#d4d6db;"></div><div class="r" style="left:0.00px;top:418.90px;width:76.50px;height:1.20px;background:#dcdcdc;"></div><div class="r" style="left:77.50px;top:463.05px;width:2896.00px;height:2.00px;background:#d4d6db;"></div><div class="r" style="left:0.00px;top:463.45px;width:76.50px;height:1.20px;background:#dcdcdc;"></div><div class="r" style="left:77.50px;top:507.60px;width:2896.00px;height:2.00px;background:#d4d6db;"></div><div class="r" style="left:0.00px;top:508.00px;width:76.50px;height:1.20px;background:#dcdcdc;"></div><div class="r" style="left:77.50px;top:552.15px;width:2896.00px;height:2.00px;background:#d4d6db;"></div><div class="r" style="left:0.00px;top:552.55px;width:76.50px;height:1.20px;background:#dcdcdc;"></div><div class="r" style="left:77.50px;top:596.70px;width:2896.00px;height:2.00px;background:#d4d6db;"></div><div class="r" style="left:0.00px;top:597.10px;width:76.50px;height:1.20px;background:#dcdcdc;"></div><div class="r" style="left:77.50px;top:641.25px;width:2896.00px;height:2.00px;background:#d4d6db;"></div><div class="r" style="left:0.00px;top:641.65px;width:76.50px;height:1.20px;background:#dcdcdc;"></div><div class="r" style="left:77.50px;top:685.80px;width:2896.00px;height:2.00px;background:#d4d6db;"></div><div class="r" style="left:0.00px;top:686.20px;width:76.50px;height:1.20px;background:#dcdcdc;"></div><div class="r" style="left:77.50px;top:730.35px;width:2896.00px;height:2.00px;background:#d4d6db;"></div><div class="r" style="left:0.00px;top:730.75px;width:76.50px;height:1.20px;background:#dcdcdc;"></div><div class="r" style="left:77.50px;top:774.90px;width:2896.00px;height:2.00px;background:#d4d6db;"></div><div class="r" style="left:0.00px;top:775.30px;width:76.50px;height:1.20px;background:#dcdcdc;"></div><div class="r" style="left:77.50px;top:819.45px;width:2896.00px;height:2.00px;background:#d4d6db;"></div><div class="r" style="left:0.00px;top:819.85px;width:76.50px;height:1.20px;background:#dcdcdc;"></div><div class="r" style="left:77.50px;top:864.00px;width:2896.00px;height:2.00px;background:#d4d6db;"></div><div class="r" style="left:0.00px;top:864.40px;width:76.50px;height:1.20px;background:#dcdcdc;"></div><div class="r" style="left:77.50px;top:908.55px;width:2896.00px;height:2.00px;background:#d4d6db;"></div><div class="r" style="left:0.00px;top:908.95px;width:76.50px;height:1.20px;background:#dcdcdc;"></div><div class="r" style="left:77.50px;top:953.10px;width:2896.00px;height:2.00px;background:#d4d6db;"></div><div class="r" style="left:0.00px;top:953.50px;width:76.50px;height:1.20px;background:#dcdcdc;"></div><div class="r" style="left:77.50px;top:997.65px;width:2896.00px;height:2.00px;background:#d4d6db;"></div><div class="r" style="left:0.00px;top:998.05px;width:76.50px;height:1.20px;background:#dcdcdc;"></div><div class="r" style="left:77.50px;top:1042.20px;width:2896.00px;height:2.00px;background:#d4d6db;"></div><div class="r" style="left:0.00px;top:1042.60px;width:76.50px;height:1.20px;background:#dcdcdc;"></div><div class="r" style="left:77.50px;top:1086.75px;width:2896.00px;height:2.00px;background:#d4d6db;"></div><div class="r" style="left:0.00px;top:1087.15px;width:76.50px;height:1.20px;background:#dcdcdc;"></div><div class="r" style="left:77.50px;top:1131.30px;width:2896.00px;height:2.00px;background:#d4d6db;"></div><div class="r" style="left:0.00px;top:1131.70px;width:76.50px;height:1.20px;background:#dcdcdc;"></div><div class="r" style="left:77.50px;top:1175.85px;width:2896.00px;height:2.00px;background:#d4d6db;"></div><div class="r" style="left:0.00px;top:1176.25px;width:76.50px;height:1.20px;background:#dcdcdc;"></div><div class="r" style="left:77.50px;top:1220.40px;width:2896.00px;height:2.00px;background:#d4d6db;"></div><div class="r" style="left:0.00px;top:1220.80px;width:76.50px;height:1.20px;background:#dcdcdc;"></div><div class="r" style="left:77.50px;top:1264.95px;width:2896.00px;height:2.00px;background:#d4d6db;"></div><div class="r" style="left:0.00px;top:1265.35px;width:76.50px;height:1.20px;background:#dcdcdc;"></div><div class="r" style="left:77.50px;top:1309.50px;width:2896.00px;height:2.00px;background:#d4d6db;"></div><div class="r" style="left:0.00px;top:1309.90px;width:76.50px;height:1.20px;background:#dcdcdc;"></div><div class="r" style="left:77.50px;top:1354.05px;width:2896.00px;height:2.00px;background:#d4d6db;"></div><div class="r" style="left:0.00px;top:1354.45px;width:76.50px;height:1.20px;background:#dcdcdc;"></div><div class="r" style="left:77.50px;top:1398.60px;width:2896.00px;height:2.00px;background:#d4d6db;"></div><div class="r" style="left:0.00px;top:1399.00px;width:76.50px;height:1.20px;background:#dcdcdc;"></div><div class="r" style="left:77.50px;top:1443.15px;width:2896.00px;height:2.00px;background:#d4d6db;"></div><div class="r" style="left:0.00px;top:1443.55px;width:76.50px;height:1.20px;background:#dcdcdc;"></div><div class="r" style="left:77.50px;top:1487.70px;width:2896.00px;height:2.00px;background:#d4d6db;"></div><div class="r" style="left:0.00px;top:1488.10px;width:76.50px;height:1.20px;background:#dcdcdc;"></div><div class="r" style="left:77.50px;top:1532.25px;width:2896.00px;height:2.00px;background:#d4d6db;"></div><div class="r" style="left:0.00px;top:1532.65px;width:76.50px;height:1.20px;background:#dcdcdc;"></div><div class="r" style="left:77.50px;top:1576.80px;width:2896.00px;height:2.00px;background:#d4d6db;"></div><div class="r" style="left:0.00px;top:1577.20px;width:76.50px;height:1.20px;background:#dcdcdc;"></div><div class="r" style="left:77.50px;top:1621.35px;width:2896.00px;height:2.00px;background:#d4d6db;"></div><div class="r" style="left:0.00px;top:1621.75px;width:76.50px;height:1.20px;background:#dcdcdc;"></div><div class="r" style="left:77.50px;top:1666.30px;width:2896.00px;height:1.20px;background:#dedede;"></div><div class="r" style="left:0.00px;top:1666.30px;width:76.50px;height:1.20px;background:#dcdcdc;"></div><div class="r" style="left:77.50px;top:1710.85px;width:2896.00px;height:1.20px;background:#dedede;"></div><div class="r" style="left:0.00px;top:1710.85px;width:76.50px;height:1.20px;background:#dcdcdc;"></div><div class="r" style="left:77.50px;top:1755.40px;width:2896.00px;height:1.20px;background:#dedede;"></div><div class="r" style="left:0.00px;top:1755.40px;width:76.50px;height:1.20px;background:#dcdcdc;"></div><div class="r" style="left:77.50px;top:1799.95px;width:2896.00px;height:1.20px;background:#dedede;"></div><div class="r" style="left:0.00px;top:1799.95px;width:76.50px;height:1.20px;background:#dcdcdc;"></div><div class="r" style="left:77.50px;top:1844.50px;width:2896.00px;height:1.20px;background:#dedede;"></div><div class="r" style="left:0.00px;top:1844.50px;width:76.50px;height:1.20px;background:#dcdcdc;"></div><div class="r" style="left:77.50px;top:1889.05px;width:2896.00px;height:1.20px;background:#dedede;"></div><div class="r" style="left:0.00px;top:1889.05px;width:76.50px;height:1.20px;background:#dcdcdc;"></div><div class="r" style="left:77.50px;top:1933.60px;width:2896.00px;height:1.20px;background:#dedede;"></div><div class="r" style="left:0.00px;top:1933.60px;width:76.50px;height:1.20px;background:#dcdcdc;"></div><div class="r" style="left:77.50px;top:1978.15px;width:2896.00px;height:1.20px;background:#dedede;"></div><div class="r" style="left:0.00px;top:1978.15px;width:76.50px;height:1.20px;background:#dcdcdc;"></div><div class="r" style="left:77.50px;top:2022.70px;width:2896.00px;height:1.20px;background:#dedede;"></div><div class="r" style="left:0.00px;top:2022.70px;width:76.50px;height:1.20px;background:#dcdcdc;"></div><div class="r" style="left:426.90px;top:1623.35px;width:1.20px;height:434.65px;background:#dedede;"></div><div class="r" style="left:777.65px;top:1623.35px;width:1.20px;height:434.65px;background:#dedede;"></div><div class="r" style="left:935.90px;top:1623.35px;width:1.20px;height:434.65px;background:#dedede;"></div><div class="r" style="left:1125.90px;top:1623.35px;width:1.20px;height:434.65px;background:#dedede;"></div><div class="r" style="left:1370.65px;top:1623.35px;width:1.20px;height:434.65px;background:#dedede;"></div><div class="r" style="left:1791.90px;top:1623.35px;width:1.20px;height:434.65px;background:#dedede;"></div><div class="r" style="left:2024.90px;top:1623.35px;width:1.20px;height:434.65px;background:#dedede;"></div><div class="r" style="left:2308.90px;top:1623.35px;width:1.20px;height:434.65px;background:#dedede;"></div><div class="r" style="left:2634.90px;top:1623.35px;width:1.20px;height:434.65px;background:#dedede;"></div><div class="r" style="left:76.50px;top:376.50px;width:1.50px;height:1681.50px;background:#c6c6c6;"></div><div class="r" style="left:0.00px;top:1755.40px;width:74.00px;height:45.75px;background:#d3eadb;"></div><div class="r" style="left:0.00px;top:1755.40px;width:74.00px;height:1.20px;background:#a6d3b2;"></div><div class="r" style="left:0.00px;top:1799.95px;width:74.00px;height:1.20px;background:#a6d3b2;"></div><div class="r" style="left:74.00px;top:1753.50px;width:4.00px;height:49.55px;background:#3a7846;"></div><div class="t" style="top:384.72px;font-size:27.5px;line-height:27.5px;color:#5f5f5f;font-weight:400;letter-spacing:-0.3px;right:3647.50px;">1</div><div class="t" style="top:429.27px;font-size:27.5px;line-height:27.5px;color:#5f5f5f;font-weight:400;letter-spacing:-0.3px;right:3647.50px;">2</div><div class="t" style="top:473.82px;font-size:27.5px;line-height:27.5px;color:#5f5f5f;font-weight:400;letter-spacing:-0.3px;right:3647.50px;">3</div><div class="t" style="top:518.37px;font-size:27.5px;line-height:27.5px;color:#5f5f5f;font-weight:400;letter-spacing:-0.3px;right:3647.50px;">4</div><div class="t" style="top:562.92px;font-size:27.5px;line-height:27.5px;color:#5f5f5f;font-weight:400;letter-spacing:-0.3px;right:3647.50px;">5</div><div class="t" style="top:607.47px;font-size:27.5px;line-height:27.5px;color:#5f5f5f;font-weight:400;letter-spacing:-0.3px;right:3647.50px;">6</div><div class="t" style="top:652.02px;font-size:27.5px;line-height:27.5px;color:#5f5f5f;font-weight:400;letter-spacing:-0.3px;right:3647.50px;">7</div><div class="t" style="top:696.57px;font-size:27.5px;line-height:27.5px;color:#5f5f5f;font-weight:400;letter-spacing:-0.3px;right:3647.50px;">8</div><div class="t" style="top:741.12px;font-size:27.5px;line-height:27.5px;color:#5f5f5f;font-weight:400;letter-spacing:-0.3px;right:3647.50px;">9</div><div class="t" style="top:785.67px;font-size:27.5px;line-height:27.5px;color:#5f5f5f;font-weight:400;letter-spacing:-0.3px;right:3647.50px;">10</div><div class="t" style="top:830.22px;font-size:27.5px;line-height:27.5px;color:#5f5f5f;font-weight:400;letter-spacing:-0.3px;right:3647.50px;">11</div><div class="t" style="top:874.77px;font-size:27.5px;line-height:27.5px;color:#5f5f5f;font-weight:400;letter-spacing:-0.3px;right:3647.50px;">12</div><div class="t" style="top:919.32px;font-size:27.5px;line-height:27.5px;color:#5f5f5f;font-weight:400;letter-spacing:-0.3px;right:3647.50px;">13</div><div class="t" style="top:963.87px;font-size:27.5px;line-height:27.5px;color:#5f5f5f;font-weight:400;letter-spacing:-0.3px;right:3647.50px;">14</div><div class="t" style="top:1008.42px;font-size:27.5px;line-height:27.5px;color:#5f5f5f;font-weight:400;letter-spacing:-0.3px;right:3647.50px;">15</div><div class="t" style="top:1052.97px;font-size:27.5px;line-height:27.5px;color:#5f5f5f;font-weight:400;letter-spacing:-0.3px;right:3647.50px;">16</div><div class="t" style="top:1097.52px;font-size:27.5px;line-height:27.5px;color:#5f5f5f;font-weight:400;letter-spacing:-0.3px;right:3647.50px;">17</div><div class="t" style="top:1142.07px;font-size:27.5px;line-height:27.5px;color:#5f5f5f;font-weight:400;letter-spacing:-0.3px;right:3647.50px;">18</div><div class="t" style="top:1186.62px;font-size:27.5px;line-height:27.5px;color:#5f5f5f;font-weight:400;letter-spacing:-0.3px;right:3647.50px;">19</div><div class="t" style="top:1231.17px;font-size:27.5px;line-height:27.5px;color:#5f5f5f;font-weight:400;letter-spacing:-0.3px;right:3647.50px;">20</div><div class="t" style="top:1275.72px;font-size:27.5px;line-height:27.5px;color:#5f5f5f;font-weight:400;letter-spacing:-0.3px;right:3647.50px;">21</div><div class="t" style="top:1320.27px;font-size:27.5px;line-height:27.5px;color:#5f5f5f;font-weight:400;letter-spacing:-0.3px;right:3647.50px;">22</div><div class="t" style="top:1364.82px;font-size:27.5px;line-height:27.5px;color:#5f5f5f;font-weight:400;letter-spacing:-0.3px;right:3647.50px;">23</div><div class="t" style="top:1409.37px;font-size:27.5px;line-height:27.5px;color:#5f5f5f;font-weight:400;letter-spacing:-0.3px;right:3647.50px;">24</div><div class="t" style="top:1453.92px;font-size:27.5px;line-height:27.5px;color:#5f5f5f;font-weight:400;letter-spacing:-0.3px;right:3647.50px;">25</div><div class="t" style="top:1498.47px;font-size:27.5px;line-height:27.5px;color:#5f5f5f;font-weight:400;letter-spacing:-0.3px;right:3647.50px;">26</div><div class="t" style="top:1543.02px;font-size:27.5px;line-height:27.5px;color:#5f5f5f;font-weight:400;letter-spacing:-0.3px;right:3647.50px;">27</div><div class="t" style="top:1587.57px;font-size:27.5px;line-height:27.5px;color:#5f5f5f;font-weight:400;letter-spacing:-0.3px;right:3647.50px;">28</div><div class="t" style="top:1632.12px;font-size:27.5px;line-height:27.5px;color:#5f5f5f;font-weight:400;letter-spacing:-0.3px;right:3647.50px;">29</div><div class="t" style="top:1676.67px;font-size:27.5px;line-height:27.5px;color:#5f5f5f;font-weight:400;letter-spacing:-0.3px;right:3647.50px;">30</div><div class="t" style="top:1721.22px;font-size:27.5px;line-height:27.5px;color:#5f5f5f;font-weight:400;letter-spacing:-0.3px;right:3647.50px;">31</div><div class="t" style="top:1765.77px;font-size:27.5px;line-height:27.5px;color:#2d6b3c;font-weight:400;letter-spacing:-0.3px;right:3647.50px;">32</div><div class="t" style="top:1810.32px;font-size:27.5px;line-height:27.5px;color:#5f5f5f;font-weight:400;letter-spacing:-0.3px;right:3647.50px;">33</div><div class="t" style="top:1854.87px;font-size:27.5px;line-height:27.5px;color:#5f5f5f;font-weight:400;letter-spacing:-0.3px;right:3647.50px;">34</div><div class="t" style="top:1899.42px;font-size:27.5px;line-height:27.5px;color:#5f5f5f;font-weight:400;letter-spacing:-0.3px;right:3647.50px;">35</div><div class="t" style="top:1943.97px;font-size:27.5px;line-height:27.5px;color:#5f5f5f;font-weight:400;letter-spacing:-0.3px;right:3647.50px;">36</div><div class="t" style="top:1988.52px;font-size:27.5px;line-height:27.5px;color:#5f5f5f;font-weight:400;letter-spacing:-0.3px;right:3647.50px;">37</div><div class="t" style="top:2033.07px;font-size:27.5px;line-height:27.5px;color:#5f5f5f;font-weight:400;letter-spacing:-0.3px;right:3647.50px;">38</div><div class="r" style="left:77.5px;top:376px;width:2896px;height:1682px;overflow:hidden;"><div class="t" style="top:9.66px;font-size:31px;line-height:31px;color:#0f0f0f;font-weight:400;left:5.75px;transform:scaleX(0.9155);transform-origin:left;">FixedAssetPostingDate</div><div class="r" style="box-sizing:border-box;left:313.00px;top:7.00px;width:33.5px;height:34px;background:#fff;border:1.5px solid #a9a9a9;border-radius:3px;"></div><svg class="r" style="left:322.00px;top:19.00px" width="16" height="10" viewBox="0 0 16 10"><path d="M1.5 1.5 L8 8 L14.5 1.5" stroke="#8d8d8d" stroke-width="1.4" fill="none"/></svg><div class="t" style="top:9.66px;font-size:31px;line-height:31px;color:#0f0f0f;font-weight:400;left:356.40px;transform:scaleX(0.9102);transform-origin:left;">FixedAssetPostingType</div><div class="r" style="box-sizing:border-box;left:663.75px;top:7.00px;width:33.5px;height:34px;background:#fff;border:1.5px solid #a9a9a9;border-radius:3px;"></div><svg class="r" style="left:672.75px;top:19.00px" width="16" height="10" viewBox="0 0 16 10"><path d="M1.5 1.5 L8 8 L14.5 1.5" stroke="#8d8d8d" stroke-width="1.4" fill="none"/></svg><div class="t" style="top:9.66px;font-size:31px;line-height:31px;color:#0f0f0f;font-weight:400;left:706.25px;transform:scaleX(0.9759);transform-origin:left;">Amount</div><div class="r" style="box-sizing:border-box;left:822.00px;top:7.00px;width:33.5px;height:34px;background:#fff;border:1.5px solid #a9a9a9;border-radius:3px;"></div><svg class="r" style="left:831.00px;top:19.00px" width="16" height="10" viewBox="0 0 16 10"><path d="M1.5 1.5 L8 8 L14.5 1.5" stroke="#8d8d8d" stroke-width="1.4" fill="none"/></svg><div class="t" style="top:9.66px;font-size:31px;line-height:31px;color:#0f0f0f;font-weight:400;left:864.25px;transform:scaleX(0.9194);transform-origin:left;">BookValue</div><div class="r" style="box-sizing:border-box;left:1012.00px;top:7.00px;width:33.5px;height:34px;background:#fff;border:1.5px solid #a9a9a9;border-radius:3px;"></div><svg class="r" style="left:1021.00px;top:19.00px" width="16" height="10" viewBox="0 0 16 10"><path d="M1.5 1.5 L8 8 L14.5 1.5" stroke="#8d8d8d" stroke-width="1.4" fill="none"/></svg><div class="t" style="top:9.66px;font-size:31px;line-height:31px;color:#0f0f0f;font-weight:400;left:1055.20px;transform:scaleX(0.9251);transform-origin:left;">ProjectedEntry</div><div class="r" style="box-sizing:border-box;left:1256.75px;top:7.00px;width:33.5px;height:34px;background:#fff;border:1.5px solid #a9a9a9;border-radius:3px;"></div><svg class="r" style="left:1265.75px;top:19.00px" width="16" height="10" viewBox="0 0 16 10"><path d="M1.5 1.5 L8 8 L14.5 1.5" stroke="#8d8d8d" stroke-width="1.4" fill="none"/></svg><div class="t" style="top:9.66px;font-size:31px;line-height:31px;color:#0f0f0f;font-weight:400;left:1300.00px;transform:scaleX(0.9467);transform-origin:left;">NumberOfDepreciationDays</div><div class="r" style="box-sizing:border-box;left:1678.00px;top:7.00px;width:33.5px;height:34px;background:#fff;border:1.5px solid #a9a9a9;border-radius:3px;"></div><svg class="r" style="left:1687.00px;top:19.00px" width="16" height="10" viewBox="0 0 16 10"><path d="M1.5 1.5 L8 8 L14.5 1.5" stroke="#8d8d8d" stroke-width="1.4" fill="none"/></svg><div class="t" style="top:9.66px;font-size:31px;line-height:31px;color:#0f0f0f;font-weight:400;left:1721.25px;transform:scaleX(0.9385);transform-origin:left;">AssetNumber</div><div class="r" style="box-sizing:border-box;left:1911.00px;top:7.00px;width:33.5px;height:34px;background:#fff;border:1.5px solid #a9a9a9;border-radius:3px;"></div><svg class="r" style="left:1920.00px;top:19.00px" width="16" height="10" viewBox="0 0 16 10"><path d="M1.5 1.5 L8 8 L14.5 1.5" stroke="#8d8d8d" stroke-width="1.4" fill="none"/></svg><div class="t" style="top:9.66px;font-size:31px;line-height:31px;color:#0f0f0f;font-weight:400;left:1953.75px;transform:scaleX(0.9297);transform-origin:left;">AssetDescription</div><div class="r" style="box-sizing:border-box;left:2195.00px;top:7.00px;width:33.5px;height:34px;background:#fff;border:1.5px solid #a9a9a9;border-radius:3px;"></div><svg class="r" style="left:2204.00px;top:19.00px" width="16" height="10" viewBox="0 0 16 10"><path d="M1.5 1.5 L8 8 L14.5 1.5" stroke="#8d8d8d" stroke-width="1.4" fill="none"/></svg><div class="t" style="top:9.66px;font-size:31px;line-height:31px;color:#0f0f0f;font-weight:400;left:2238.10px;transform:scaleX(0.8861);transform-origin:left;">FixedAssetClassCode</div><div class="r" style="box-sizing:border-box;left:2521.00px;top:7.00px;width:33.5px;height:34px;background:#fff;border:1.5px solid #a9a9a9;border-radius:3px;"></div><svg class="r" style="left:2530.00px;top:19.00px" width="16" height="10" viewBox="0 0 16 10"><path d="M1.5 1.5 L8 8 L14.5 1.5" stroke="#8d8d8d" stroke-width="1.4" fill="none"/></svg><div class="t" style="top:9.66px;font-size:31px;line-height:31px;color:#0f0f0f;font-weight:400;left:2563.75px;transform:scaleX(0.8953);transform-origin:left;">FixedAssetSubclassCode</div><div class="r" style="box-sizing:border-box;left:2891.50px;top:7.00px;width:33.5px;height:34px;background:#fff;border:1.5px solid #a9a9a9;border-radius:3px;"></div><svg class="r" style="left:2900.50px;top:19.00px" width="16" height="10" viewBox="0 0 16 10"><path d="M1.5 1.5 L8 8 L14.5 1.5" stroke="#8d8d8d" stroke-width="1.4" fill="none"/></svg><div class="t" style="top:53.81px;font-size:31px;line-height:31px;color:#0f0f0f;font-weight:400;right:2552.50px;transform:scaleX(0.9972);transform-origin:right;">1/1/2024</div><div class="t" style="top:53.81px;font-size:31px;line-height:31px;color:#0f0f0f;font-weight:400;left:356.75px;transform:scaleX(0.9452);transform-origin:left;">Depreciation</div><div class="t" style="top:53.81px;font-size:31px;line-height:31px;color:#0f0f0f;font-weight:400;right:2044.00px;transform:scaleX(0.9273);transform-origin:right;">-36,783.88</div><div class="t" style="top:53.81px;font-size:31px;line-height:31px;color:#0f0f0f;font-weight:400;right:1854.00px;transform:scaleX(0.9090);transform-origin:right;">0.00</div><div class="t" style="top:53.81px;font-size:31px;line-height:31px;color:#0f0f0f;font-weight:400;left:1137.50px;transform:scaleX(0.8029);transform-origin:left;">TRUE</div><div class="t" style="top:53.81px;font-size:31px;line-height:31px;color:#0f0f0f;font-weight:400;right:1187.50px;transform:scaleX(0.9370);transform-origin:right;">1554</div><div class="t" style="top:53.81px;font-size:31px;line-height:31px;color:#0f0f0f;font-weight:400;left:1721.50px;transform:scaleX(0.9153);transform-origin:left;">FA000010</div><div class="t" style="top:53.81px;font-size:31px;line-height:31px;color:#0f0f0f;font-weight:400;left:1953.50px;transform:scaleX(0.9414);transform-origin:left;">Mercedes 300</div><div class="t" style="top:53.81px;font-size:31px;line-height:31px;color:#0f0f0f;font-weight:400;left:2237.00px;transform:scaleX(0.8455);transform-origin:left;">TANGIBLE</div><div class="t" style="top:53.81px;font-size:31px;line-height:31px;color:#0f0f0f;font-weight:400;left:2563.50px;transform:scaleX(0.8214);transform-origin:left;">CAR</div><div class="t" style="top:98.36px;font-size:31px;line-height:31px;color:#0f0f0f;font-weight:400;right:2552.50px;">11/30/2024</div><div class="t" style="top:98.36px;font-size:31px;line-height:31px;color:#0f0f0f;font-weight:400;left:356.75px;transform:scaleX(0.9452);transform-origin:left;">Depreciation</div><div class="t" style="top:98.36px;font-size:31px;line-height:31px;color:#0f0f0f;font-weight:400;right:2044.00px;transform:scaleX(0.9090);transform-origin:right;">0.00</div><div class="t" style="top:98.36px;font-size:31px;line-height:31px;color:#0f0f0f;font-weight:400;right:1854.00px;transform:scaleX(0.9090);transform-origin:right;">0.00</div><div class="t" style="top:98.36px;font-size:31px;line-height:31px;color:#0f0f0f;font-weight:400;left:1137.50px;transform:scaleX(0.8029);transform-origin:left;">TRUE</div><div class="t" style="top:98.36px;font-size:31px;line-height:31px;color:#0f0f0f;font-weight:400;right:1187.50px;transform:scaleX(0.9370);transform-origin:right;">329</div><div class="t" style="top:98.36px;font-size:31px;line-height:31px;color:#0f0f0f;font-weight:400;left:1721.50px;transform:scaleX(0.9153);transform-origin:left;">FA000010</div><div class="t" style="top:98.36px;font-size:31px;line-height:31px;color:#0f0f0f;font-weight:400;left:1953.50px;transform:scaleX(0.9414);transform-origin:left;">Mercedes 300</div><div class="t" style="top:98.36px;font-size:31px;line-height:31px;color:#0f0f0f;font-weight:400;left:2237.00px;transform:scaleX(0.8455);transform-origin:left;">TANGIBLE</div><div class="t" style="top:98.36px;font-size:31px;line-height:31px;color:#0f0f0f;font-weight:400;left:2563.50px;transform:scaleX(0.8214);transform-origin:left;">CAR</div><div class="t" style="top:142.91px;font-size:31px;line-height:31px;color:#0f0f0f;font-weight:400;right:2552.50px;transform:scaleX(0.9839);transform-origin:right;">12/31/2024</div><div class="t" style="top:142.91px;font-size:31px;line-height:31px;color:#0f0f0f;font-weight:400;left:356.75px;transform:scaleX(0.9452);transform-origin:left;">Depreciation</div><div class="t" style="top:142.91px;font-size:31px;line-height:31px;color:#0f0f0f;font-weight:400;right:2044.00px;transform:scaleX(0.9090);transform-origin:right;">0.00</div><div class="t" style="top:142.91px;font-size:31px;line-height:31px;color:#0f0f0f;font-weight:400;right:1854.00px;transform:scaleX(0.9090);transform-origin:right;">0.00</div><div class="t" style="top:142.91px;font-size:31px;line-height:31px;color:#0f0f0f;font-weight:400;left:1137.50px;transform:scaleX(0.8029);transform-origin:left;">TRUE</div><div class="t" style="top:142.91px;font-size:31px;line-height:31px;color:#0f0f0f;font-weight:400;right:1187.50px;transform:scaleX(0.9370);transform-origin:right;">30</div><div class="t" style="top:142.91px;font-size:31px;line-height:31px;color:#0f0f0f;font-weight:400;left:1721.50px;transform:scaleX(0.9153);transform-origin:left;">FA000010</div><div class="t" style="top:142.91px;font-size:31px;line-height:31px;color:#0f0f0f;font-weight:400;left:1953.50px;transform:scaleX(0.9414);transform-origin:left;">Mercedes 300</div><div class="t" style="top:142.91px;font-size:31px;line-height:31px;color:#0f0f0f;font-weight:400;left:2237.00px;transform:scaleX(0.8455);transform-origin:left;">TANGIBLE</div><div class="t" style="top:142.91px;font-size:31px;line-height:31px;color:#0f0f0f;font-weight:400;left:2563.50px;transform:scaleX(0.8214);transform-origin:left;">CAR</div><div class="t" style="top:187.46px;font-size:31px;line-height:31px;color:#0f0f0f;font-weight:400;right:2552.50px;transform:scaleX(0.9972);transform-origin:right;">1/1/2024</div><div class="t" style="top:187.46px;font-size:31px;line-height:31px;color:#0f0f0f;font-weight:400;left:356.75px;transform:scaleX(0.9452);transform-origin:left;">Depreciation</div><div class="t" style="top:187.46px;font-size:31px;line-height:31px;color:#0f0f0f;font-weight:400;right:2044.00px;transform:scaleX(0.9273);transform-origin:right;">-56,094.03</div><div class="t" style="top:187.46px;font-size:31px;line-height:31px;color:#0f0f0f;font-weight:400;right:1854.00px;transform:scaleX(0.9090);transform-origin:right;">0.00</div><div class="t" style="top:187.46px;font-size:31px;line-height:31px;color:#0f0f0f;font-weight:400;left:1137.50px;transform:scaleX(0.8029);transform-origin:left;">TRUE</div><div class="t" style="top:187.46px;font-size:31px;line-height:31px;color:#0f0f0f;font-weight:400;right:1187.50px;transform:scaleX(0.9370);transform-origin:right;">1801</div><div class="t" style="top:187.46px;font-size:31px;line-height:31px;color:#0f0f0f;font-weight:400;left:1721.50px;transform:scaleX(0.9153);transform-origin:left;">FA000020</div><div class="t" style="top:187.46px;font-size:31px;line-height:31px;color:#0f0f0f;font-weight:400;left:1953.50px;transform:scaleX(0.9426);transform-origin:left;">Toyota Supra 3.0</div><div class="t" style="top:187.46px;font-size:31px;line-height:31px;color:#0f0f0f;font-weight:400;left:2237.00px;transform:scaleX(0.8455);transform-origin:left;">TANGIBLE</div><div class="t" style="top:187.46px;font-size:31px;line-height:31px;color:#0f0f0f;font-weight:400;left:2563.50px;transform:scaleX(0.8214);transform-origin:left;">CAR</div><div class="t" style="top:232.01px;font-size:31px;line-height:31px;color:#0f0f0f;font-weight:400;right:2552.50px;">11/30/2024</div><div class="t" style="top:232.01px;font-size:31px;line-height:31px;color:#0f0f0f;font-weight:400;left:356.75px;transform:scaleX(0.9452);transform-origin:left;">Depreciation</div><div class="t" style="top:232.01px;font-size:31px;line-height:31px;color:#0f0f0f;font-weight:400;right:2044.00px;transform:scaleX(0.9090);transform-origin:right;">0.00</div><div class="t" style="top:232.01px;font-size:31px;line-height:31px;color:#0f0f0f;font-weight:400;right:1854.00px;transform:scaleX(0.9090);transform-origin:right;">0.00</div><div class="t" style="top:232.01px;font-size:31px;line-height:31px;color:#0f0f0f;font-weight:400;left:1137.50px;transform:scaleX(0.8029);transform-origin:left;">TRUE</div><div class="t" style="top:232.01px;font-size:31px;line-height:31px;color:#0f0f0f;font-weight:400;right:1187.50px;transform:scaleX(0.9370);transform-origin:right;">329</div><div class="t" style="top:232.01px;font-size:31px;line-height:31px;color:#0f0f0f;font-weight:400;left:1721.50px;transform:scaleX(0.9153);transform-origin:left;">FA000020</div><div class="t" style="top:232.01px;font-size:31px;line-height:31px;color:#0f0f0f;font-weight:400;left:1953.50px;transform:scaleX(0.9426);transform-origin:left;">Toyota Supra 3.0</div><div class="t" style="top:232.01px;font-size:31px;line-height:31px;color:#0f0f0f;font-weight:400;left:2237.00px;transform:scaleX(0.8455);transform-origin:left;">TANGIBLE</div><div class="t" style="top:232.01px;font-size:31px;line-height:31px;color:#0f0f0f;font-weight:400;left:2563.50px;transform:scaleX(0.8214);transform-origin:left;">CAR</div><div class="t" style="top:276.56px;font-size:31px;line-height:31px;color:#0f0f0f;font-weight:400;right:2552.50px;transform:scaleX(0.9839);transform-origin:right;">12/31/2024</div><div class="t" style="top:276.56px;font-size:31px;line-height:31px;color:#0f0f0f;font-weight:400;left:356.75px;transform:scaleX(0.9452);transform-origin:left;">Depreciation</div><div class="t" style="top:276.56px;font-size:31px;line-height:31px;color:#0f0f0f;font-weight:400;right:2044.00px;transform:scaleX(0.9090);transform-origin:right;">0.00</div><div class="t" style="top:276.56px;font-size:31px;line-height:31px;color:#0f0f0f;font-weight:400;right:1854.00px;transform:scaleX(0.9090);transform-origin:right;">0.00</div><div class="t" style="top:276.56px;font-size:31px;line-height:31px;color:#0f0f0f;font-weight:400;left:1137.50px;transform:scaleX(0.8029);transform-origin:left;">TRUE</div><div class="t" style="top:276.56px;font-size:31px;line-height:31px;color:#0f0f0f;font-weight:400;right:1187.50px;transform:scaleX(0.9370);transform-origin:right;">30</div><div class="t" style="top:276.56px;font-size:31px;line-height:31px;color:#0f0f0f;font-weight:400;left:1721.50px;transform:scaleX(0.9153);transform-origin:left;">FA000020</div><div class="t" style="top:276.56px;font-size:31px;line-height:31px;color:#0f0f0f;font-weight:400;left:1953.50px;transform:scaleX(0.9426);transform-origin:left;">Toyota Supra 3.0</div><div class="t" style="top:276.56px;font-size:31px;line-height:31px;color:#0f0f0f;font-weight:400;left:2237.00px;transform:scaleX(0.8455);transform-origin:left;">TANGIBLE</div><div class="t" style="top:276.56px;font-size:31px;line-height:31px;color:#0f0f0f;font-weight:400;left:2563.50px;transform:scaleX(0.8214);transform-origin:left;">CAR</div><div class="t" style="top:321.11px;font-size:31px;line-height:31px;color:#0f0f0f;font-weight:400;right:2552.50px;transform:scaleX(0.9972);transform-origin:right;">1/1/2024</div><div class="t" style="top:321.11px;font-size:31px;line-height:31px;color:#0f0f0f;font-weight:400;left:356.75px;transform:scaleX(0.9452);transform-origin:left;">Depreciation</div><div class="t" style="top:321.11px;font-size:31px;line-height:31px;color:#0f0f0f;font-weight:400;right:2044.00px;transform:scaleX(0.9273);transform-origin:right;">-20,421.44</div><div class="t" style="top:321.11px;font-size:31px;line-height:31px;color:#0f0f0f;font-weight:400;right:1854.00px;transform:scaleX(0.9090);transform-origin:right;">0.00</div><div class="t" style="top:321.11px;font-size:31px;line-height:31px;color:#0f0f0f;font-weight:400;left:1137.50px;transform:scaleX(0.8029);transform-origin:left;">TRUE</div><div class="t" style="top:321.11px;font-size:31px;line-height:31px;color:#0f0f0f;font-weight:400;right:1187.50px;transform:scaleX(0.9370);transform-origin:right;">1801</div><div class="t" style="top:321.11px;font-size:31px;line-height:31px;color:#0f0f0f;font-weight:400;left:1721.50px;transform:scaleX(0.9153);transform-origin:left;">FA000030</div><div class="t" style="top:321.11px;font-size:31px;line-height:31px;color:#0f0f0f;font-weight:400;left:1953.50px;transform:scaleX(0.9309);transform-origin:left;">VW Transporter</div><div class="t" style="top:321.11px;font-size:31px;line-height:31px;color:#0f0f0f;font-weight:400;left:2237.00px;transform:scaleX(0.8455);transform-origin:left;">TANGIBLE</div><div class="t" style="top:321.11px;font-size:31px;line-height:31px;color:#0f0f0f;font-weight:400;left:2563.50px;transform:scaleX(0.8214);transform-origin:left;">CAR</div><div class="t" style="top:365.66px;font-size:31px;line-height:31px;color:#0f0f0f;font-weight:400;right:2552.50px;">11/30/2024</div><div class="t" style="top:365.66px;font-size:31px;line-height:31px;color:#0f0f0f;font-weight:400;left:356.75px;transform:scaleX(0.9452);transform-origin:left;">Depreciation</div><div class="t" style="top:365.66px;font-size:31px;line-height:31px;color:#0f0f0f;font-weight:400;right:2044.00px;transform:scaleX(0.9090);transform-origin:right;">0.00</div><div class="t" style="top:365.66px;font-size:31px;line-height:31px;color:#0f0f0f;font-weight:400;right:1854.00px;transform:scaleX(0.9090);transform-origin:right;">0.00</div><div class="t" style="top:365.66px;font-size:31px;line-height:31px;color:#0f0f0f;font-weight:400;left:1137.50px;transform:scaleX(0.8029);transform-origin:left;">TRUE</div><div class="t" style="top:365.66px;font-size:31px;line-height:31px;color:#0f0f0f;font-weight:400;right:1187.50px;transform:scaleX(0.9370);transform-origin:right;">329</div><div class="t" style="top:365.66px;font-size:31px;line-height:31px;color:#0f0f0f;font-weight:400;left:1721.50px;transform:scaleX(0.9153);transform-origin:left;">FA000030</div><div class="t" style="top:365.66px;font-size:31px;line-height:31px;color:#0f0f0f;font-weight:400;left:1953.50px;transform:scaleX(0.9309);transform-origin:left;">VW Transporter</div><div class="t" style="top:365.66px;font-size:31px;line-height:31px;color:#0f0f0f;font-weight:400;left:2237.00px;transform:scaleX(0.8455);transform-origin:left;">TANGIBLE</div><div class="t" style="top:365.66px;font-size:31px;line-height:31px;color:#0f0f0f;font-weight:400;left:2563.50px;transform:scaleX(0.8214);transform-origin:left;">CAR</div><div class="t" style="top:410.21px;font-size:31px;line-height:31px;color:#0f0f0f;font-weight:400;right:2552.50px;transform:scaleX(0.9839);transform-origin:right;">12/31/2024</div><div class="t" style="top:410.21px;font-size:31px;line-height:31px;color:#0f0f0f;font-weight:400;left:356.75px;transform:scaleX(0.9452);transform-origin:left;">Depreciation</div><div class="t" style="top:410.21px;font-size:31px;line-height:31px;color:#0f0f0f;font-weight:400;right:2044.00px;transform:scaleX(0.9090);transform-origin:right;">0.00</div><div class="t" style="top:410.21px;font-size:31px;line-height:31px;color:#0f0f0f;font-weight:400;right:1854.00px;transform:scaleX(0.9090);transform-origin:right;">0.00</div><div class="t" style="top:410.21px;font-size:31px;line-height:31px;color:#0f0f0f;font-weight:400;left:1137.50px;transform:scaleX(0.8029);transform-origin:left;">TRUE</div><div class="t" style="top:410.21px;font-size:31px;line-height:31px;color:#0f0f0f;font-weight:400;right:1187.50px;transform:scaleX(0.9370);transform-origin:right;">30</div><div class="t" style="top:410.21px;font-size:31px;line-height:31px;color:#0f0f0f;font-weight:400;left:1721.50px;transform:scaleX(0.9153);transform-origin:left;">FA000030</div><div class="t" style="top:410.21px;font-size:31px;line-height:31px;color:#0f0f0f;font-weight:400;left:1953.50px;transform:scaleX(0.9309);transform-origin:left;">VW Transporter</div><div class="t" style="top:410.21px;font-size:31px;line-height:31px;color:#0f0f0f;font-weight:400;left:2237.00px;transform:scaleX(0.8455);transform-origin:left;">TANGIBLE</div><div class="t" style="top:410.21px;font-size:31px;line-height:31px;color:#0f0f0f;font-weight:400;left:2563.50px;transform:scaleX(0.8214);transform-origin:left;">CAR</div><div class="t" style="top:454.76px;font-size:31px;line-height:31px;color:#0f0f0f;font-weight:400;right:2552.50px;transform:scaleX(0.9972);transform-origin:right;">1/1/2024</div><div class="t" style="top:454.76px;font-size:31px;line-height:31px;color:#0f0f0f;font-weight:400;left:356.75px;transform:scaleX(0.9452);transform-origin:left;">Depreciation</div><div class="t" style="top:454.76px;font-size:31px;line-height:31px;color:#0f0f0f;font-weight:400;right:2044.00px;transform:scaleX(0.9260);transform-origin:right;">-5,087.00</div><div class="t" style="top:454.76px;font-size:31px;line-height:31px;color:#0f0f0f;font-weight:400;right:1854.00px;transform:scaleX(0.9090);transform-origin:right;">4,064.23</div><div class="t" style="top:454.76px;font-size:31px;line-height:31px;color:#0f0f0f;font-weight:400;left:1137.50px;transform:scaleX(0.8029);transform-origin:left;">TRUE</div><div class="t" style="top:454.76px;font-size:31px;line-height:31px;color:#0f0f0f;font-weight:400;right:1187.50px;transform:scaleX(0.9370);transform-origin:right;">1801</div><div class="t" style="top:454.76px;font-size:31px;line-height:31px;color:#0f0f0f;font-weight:400;left:1721.50px;transform:scaleX(0.9153);transform-origin:left;">FA000050</div><div class="t" style="top:454.76px;font-size:31px;line-height:31px;color:#0f0f0f;font-weight:400;left:1953.50px;transform:scaleX(0.9379);transform-origin:left;">Conveyor Belt</div><div class="t" style="top:454.76px;font-size:31px;line-height:31px;color:#0f0f0f;font-weight:400;left:2237.00px;transform:scaleX(0.8455);transform-origin:left;">TANGIBLE</div><div class="t" style="top:454.76px;font-size:31px;line-height:31px;color:#0f0f0f;font-weight:400;left:2563.50px;transform:scaleX(0.8628);transform-origin:left;">MACHINERY</div><div class="t" style="top:499.31px;font-size:31px;line-height:31px;color:#0f0f0f;font-weight:400;right:2552.50px;">11/30/2024</div><div class="t" style="top:499.31px;font-size:31px;line-height:31px;color:#0f0f0f;font-weight:400;left:356.75px;transform:scaleX(0.9452);transform-origin:left;">Depreciation</div><div class="t" style="top:499.31px;font-size:31px;line-height:31px;color:#0f0f0f;font-weight:400;right:2044.00px;transform:scaleX(0.9394);transform-origin:right;">-929.00</div><div class="t" style="top:499.31px;font-size:31px;line-height:31px;color:#0f0f0f;font-weight:400;right:1854.00px;transform:scaleX(0.9090);transform-origin:right;">3,135.23</div><div class="t" style="top:499.31px;font-size:31px;line-height:31px;color:#0f0f0f;font-weight:400;left:1137.50px;transform:scaleX(0.8029);transform-origin:left;">TRUE</div><div class="t" style="top:499.31px;font-size:31px;line-height:31px;color:#0f0f0f;font-weight:400;right:1187.50px;transform:scaleX(0.9370);transform-origin:right;">329</div><div class="t" style="top:499.31px;font-size:31px;line-height:31px;color:#0f0f0f;font-weight:400;left:1721.50px;transform:scaleX(0.9153);transform-origin:left;">FA000050</div><div class="t" style="top:499.31px;font-size:31px;line-height:31px;color:#0f0f0f;font-weight:400;left:1953.50px;transform:scaleX(0.9379);transform-origin:left;">Conveyor Belt</div><div class="t" style="top:499.31px;font-size:31px;line-height:31px;color:#0f0f0f;font-weight:400;left:2237.00px;transform:scaleX(0.8455);transform-origin:left;">TANGIBLE</div><div class="t" style="top:499.31px;font-size:31px;line-height:31px;color:#0f0f0f;font-weight:400;left:2563.50px;transform:scaleX(0.8628);transform-origin:left;">MACHINERY</div><div class="t" style="top:543.86px;font-size:31px;line-height:31px;color:#0f0f0f;font-weight:400;right:2552.50px;transform:scaleX(0.9839);transform-origin:right;">12/31/2024</div><div class="t" style="top:543.86px;font-size:31px;line-height:31px;color:#0f0f0f;font-weight:400;left:356.75px;transform:scaleX(0.9452);transform-origin:left;">Depreciation</div><div class="t" style="top:543.86px;font-size:31px;line-height:31px;color:#0f0f0f;font-weight:400;right:2044.00px;transform:scaleX(0.9399);transform-origin:right;">-85.00</div><div class="t" style="top:543.86px;font-size:31px;line-height:31px;color:#0f0f0f;font-weight:400;right:1854.00px;transform:scaleX(0.9090);transform-origin:right;">3,050.23</div><div class="t" style="top:543.86px;font-size:31px;line-height:31px;color:#0f0f0f;font-weight:400;left:1137.50px;transform:scaleX(0.8029);transform-origin:left;">TRUE</div><div class="t" style="top:543.86px;font-size:31px;line-height:31px;color:#0f0f0f;font-weight:400;right:1187.50px;transform:scaleX(0.9370);transform-origin:right;">30</div><div class="t" style="top:543.86px;font-size:31px;line-height:31px;color:#0f0f0f;font-weight:400;left:1721.50px;transform:scaleX(0.9153);transform-origin:left;">FA000050</div><div class="t" style="top:543.86px;font-size:31px;line-height:31px;color:#0f0f0f;font-weight:400;left:1953.50px;transform:scaleX(0.9379);transform-origin:left;">Conveyor Belt</div><div class="t" style="top:543.86px;font-size:31px;line-height:31px;color:#0f0f0f;font-weight:400;left:2237.00px;transform:scaleX(0.8455);transform-origin:left;">TANGIBLE</div><div class="t" style="top:543.86px;font-size:31px;line-height:31px;color:#0f0f0f;font-weight:400;left:2563.50px;transform:scaleX(0.8628);transform-origin:left;">MACHINERY</div><div class="t" style="top:588.41px;font-size:31px;line-height:31px;color:#0f0f0f;font-weight:400;right:2552.50px;transform:scaleX(0.9972);transform-origin:right;">1/1/2024</div><div class="t" style="top:588.41px;font-size:31px;line-height:31px;color:#0f0f0f;font-weight:400;left:356.75px;transform:scaleX(0.9452);transform-origin:left;">Depreciation</div><div class="t" style="top:588.41px;font-size:31px;line-height:31px;color:#0f0f0f;font-weight:400;right:2044.00px;transform:scaleX(0.9260);transform-origin:right;">-4,352.00</div><div class="t" style="top:588.41px;font-size:31px;line-height:31px;color:#0f0f0f;font-weight:400;right:1854.00px;transform:scaleX(0.9090);transform-origin:right;">1,809.43</div><div class="t" style="top:588.41px;font-size:31px;line-height:31px;color:#0f0f0f;font-weight:400;left:1137.50px;transform:scaleX(0.8029);transform-origin:left;">TRUE</div><div class="t" style="top:588.41px;font-size:31px;line-height:31px;color:#0f0f0f;font-weight:400;right:1187.50px;transform:scaleX(0.9370);transform-origin:right;">1801</div><div class="t" style="top:588.41px;font-size:31px;line-height:31px;color:#0f0f0f;font-weight:400;left:1721.50px;transform:scaleX(0.9153);transform-origin:left;">FA000060</div><div class="t" style="top:588.41px;font-size:31px;line-height:31px;color:#0f0f0f;font-weight:400;left:1953.50px;transform:scaleX(0.9383);transform-origin:left;">Conveyor Lift</div><div class="t" style="top:588.41px;font-size:31px;line-height:31px;color:#0f0f0f;font-weight:400;left:2237.00px;transform:scaleX(0.8455);transform-origin:left;">TANGIBLE</div><div class="t" style="top:588.41px;font-size:31px;line-height:31px;color:#0f0f0f;font-weight:400;left:2563.50px;transform:scaleX(0.8628);transform-origin:left;">MACHINERY</div><div class="t" style="top:632.96px;font-size:31px;line-height:31px;color:#0f0f0f;font-weight:400;right:2552.50px;">11/30/2024</div><div class="t" style="top:632.96px;font-size:31px;line-height:31px;color:#0f0f0f;font-weight:400;left:356.75px;transform:scaleX(0.9452);transform-origin:left;">Depreciation</div><div class="t" style="top:632.96px;font-size:31px;line-height:31px;color:#0f0f0f;font-weight:400;right:2044.00px;transform:scaleX(0.9394);transform-origin:right;">-795.00</div><div class="t" style="top:632.96px;font-size:31px;line-height:31px;color:#0f0f0f;font-weight:400;right:1854.00px;transform:scaleX(0.9090);transform-origin:right;">1,014.43</div><div class="t" style="top:632.96px;font-size:31px;line-height:31px;color:#0f0f0f;font-weight:400;left:1137.50px;transform:scaleX(0.8029);transform-origin:left;">TRUE</div><div class="t" style="top:632.96px;font-size:31px;line-height:31px;color:#0f0f0f;font-weight:400;right:1187.50px;transform:scaleX(0.9370);transform-origin:right;">329</div><div class="t" style="top:632.96px;font-size:31px;line-height:31px;color:#0f0f0f;font-weight:400;left:1721.50px;transform:scaleX(0.9153);transform-origin:left;">FA000060</div><div class="t" style="top:632.96px;font-size:31px;line-height:31px;color:#0f0f0f;font-weight:400;left:1953.50px;transform:scaleX(0.9383);transform-origin:left;">Conveyor Lift</div><div class="t" style="top:632.96px;font-size:31px;line-height:31px;color:#0f0f0f;font-weight:400;left:2237.00px;transform:scaleX(0.8455);transform-origin:left;">TANGIBLE</div><div class="t" style="top:632.96px;font-size:31px;line-height:31px;color:#0f0f0f;font-weight:400;left:2563.50px;transform:scaleX(0.8628);transform-origin:left;">MACHINERY</div><div class="t" style="top:677.51px;font-size:31px;line-height:31px;color:#0f0f0f;font-weight:400;right:2552.50px;transform:scaleX(0.9839);transform-origin:right;">12/31/2024</div><div class="t" style="top:677.51px;font-size:31px;line-height:31px;color:#0f0f0f;font-weight:400;left:356.75px;transform:scaleX(0.9452);transform-origin:left;">Depreciation</div><div class="t" style="top:677.51px;font-size:31px;line-height:31px;color:#0f0f0f;font-weight:400;right:2044.00px;transform:scaleX(0.9399);transform-origin:right;">-72.00</div><div class="t" style="top:677.51px;font-size:31px;line-height:31px;color:#0f0f0f;font-weight:400;right:1854.00px;transform:scaleX(0.9192);transform-origin:right;">942.43</div><div class="t" style="top:677.51px;font-size:31px;line-height:31px;color:#0f0f0f;font-weight:400;left:1137.50px;transform:scaleX(0.8029);transform-origin:left;">TRUE</div><div class="t" style="top:677.51px;font-size:31px;line-height:31px;color:#0f0f0f;font-weight:400;right:1187.50px;transform:scaleX(0.9370);transform-origin:right;">30</div><div class="t" style="top:677.51px;font-size:31px;line-height:31px;color:#0f0f0f;font-weight:400;left:1721.50px;transform:scaleX(0.9153);transform-origin:left;">FA000060</div><div class="t" style="top:677.51px;font-size:31px;line-height:31px;color:#0f0f0f;font-weight:400;left:1953.50px;transform:scaleX(0.9383);transform-origin:left;">Conveyor Lift</div><div class="t" style="top:677.51px;font-size:31px;line-height:31px;color:#0f0f0f;font-weight:400;left:2237.00px;transform:scaleX(0.8455);transform-origin:left;">TANGIBLE</div><div class="t" style="top:677.51px;font-size:31px;line-height:31px;color:#0f0f0f;font-weight:400;left:2563.50px;transform:scaleX(0.8628);transform-origin:left;">MACHINERY</div><div class="t" style="top:722.06px;font-size:31px;line-height:31px;color:#0f0f0f;font-weight:400;right:2552.50px;transform:scaleX(0.9972);transform-origin:right;">1/1/2024</div><div class="t" style="top:722.06px;font-size:31px;line-height:31px;color:#0f0f0f;font-weight:400;left:356.75px;transform:scaleX(0.9452);transform-origin:left;">Depreciation</div><div class="t" style="top:722.06px;font-size:31px;line-height:31px;color:#0f0f0f;font-weight:400;right:2044.00px;transform:scaleX(0.9260);transform-origin:right;">-3,690.27</div><div class="t" style="top:722.06px;font-size:31px;line-height:31px;color:#0f0f0f;font-weight:400;right:1854.00px;transform:scaleX(0.9090);transform-origin:right;">0.00</div><div class="t" style="top:722.06px;font-size:31px;line-height:31px;color:#0f0f0f;font-weight:400;left:1137.50px;transform:scaleX(0.8029);transform-origin:left;">TRUE</div><div class="t" style="top:722.06px;font-size:31px;line-height:31px;color:#0f0f0f;font-weight:400;right:1187.50px;transform:scaleX(0.9370);transform-origin:right;">1801</div><div class="t" style="top:722.06px;font-size:31px;line-height:31px;color:#0f0f0f;font-weight:400;left:1721.50px;transform:scaleX(0.9153);transform-origin:left;">FA000070</div><div class="t" style="top:722.06px;font-size:31px;line-height:31px;color:#0f0f0f;font-weight:400;left:1953.50px;transform:scaleX(0.9492);transform-origin:left;">Conveyor Computer</div><div class="t" style="top:722.06px;font-size:31px;line-height:31px;color:#0f0f0f;font-weight:400;left:2237.00px;transform:scaleX(0.8455);transform-origin:left;">TANGIBLE</div><div class="t" style="top:722.06px;font-size:31px;line-height:31px;color:#0f0f0f;font-weight:400;left:2563.50px;transform:scaleX(0.8628);transform-origin:left;">MACHINERY</div><div class="t" style="top:766.61px;font-size:31px;line-height:31px;color:#0f0f0f;font-weight:400;right:2552.50px;">11/30/2024</div><div class="t" style="top:766.61px;font-size:31px;line-height:31px;color:#0f0f0f;font-weight:400;left:356.75px;transform:scaleX(0.9452);transform-origin:left;">Depreciation</div><div class="t" style="top:766.61px;font-size:31px;line-height:31px;color:#0f0f0f;font-weight:400;right:2044.00px;transform:scaleX(0.9090);transform-origin:right;">0.00</div><div class="t" style="top:766.61px;font-size:31px;line-height:31px;color:#0f0f0f;font-weight:400;right:1854.00px;transform:scaleX(0.9090);transform-origin:right;">0.00</div><div class="t" style="top:766.61px;font-size:31px;line-height:31px;color:#0f0f0f;font-weight:400;left:1137.50px;transform:scaleX(0.8029);transform-origin:left;">TRUE</div><div class="t" style="top:766.61px;font-size:31px;line-height:31px;color:#0f0f0f;font-weight:400;right:1187.50px;transform:scaleX(0.9370);transform-origin:right;">329</div><div class="t" style="top:766.61px;font-size:31px;line-height:31px;color:#0f0f0f;font-weight:400;left:1721.50px;transform:scaleX(0.9153);transform-origin:left;">FA000070</div><div class="t" style="top:766.61px;font-size:31px;line-height:31px;color:#0f0f0f;font-weight:400;left:1953.50px;transform:scaleX(0.9492);transform-origin:left;">Conveyor Computer</div><div class="t" style="top:766.61px;font-size:31px;line-height:31px;color:#0f0f0f;font-weight:400;left:2237.00px;transform:scaleX(0.8455);transform-origin:left;">TANGIBLE</div><div class="t" style="top:766.61px;font-size:31px;line-height:31px;color:#0f0f0f;font-weight:400;left:2563.50px;transform:scaleX(0.8628);transform-origin:left;">MACHINERY</div><div class="t" style="top:811.16px;font-size:31px;line-height:31px;color:#0f0f0f;font-weight:400;right:2552.50px;transform:scaleX(0.9839);transform-origin:right;">12/31/2024</div><div class="t" style="top:811.16px;font-size:31px;line-height:31px;color:#0f0f0f;font-weight:400;left:356.75px;transform:scaleX(0.9452);transform-origin:left;">Depreciation</div><div class="t" style="top:811.16px;font-size:31px;line-height:31px;color:#0f0f0f;font-weight:400;right:2044.00px;transform:scaleX(0.9090);transform-origin:right;">0.00</div><div class="t" style="top:811.16px;font-size:31px;line-height:31px;color:#0f0f0f;font-weight:400;right:1854.00px;transform:scaleX(0.9090);transform-origin:right;">0.00</div><div class="t" style="top:811.16px;font-size:31px;line-height:31px;color:#0f0f0f;font-weight:400;left:1137.50px;transform:scaleX(0.8029);transform-origin:left;">TRUE</div><div class="t" style="top:811.16px;font-size:31px;line-height:31px;color:#0f0f0f;font-weight:400;right:1187.50px;transform:scaleX(0.9370);transform-origin:right;">30</div><div class="t" style="top:811.16px;font-size:31px;line-height:31px;color:#0f0f0f;font-weight:400;left:1721.50px;transform:scaleX(0.9153);transform-origin:left;">FA000070</div><div class="t" style="top:811.16px;font-size:31px;line-height:31px;color:#0f0f0f;font-weight:400;left:1953.50px;transform:scaleX(0.9492);transform-origin:left;">Conveyor Computer</div><div class="t" style="top:811.16px;font-size:31px;line-height:31px;color:#0f0f0f;font-weight:400;left:2237.00px;transform:scaleX(0.8455);transform-origin:left;">TANGIBLE</div><div class="t" style="top:811.16px;font-size:31px;line-height:31px;color:#0f0f0f;font-weight:400;left:2563.50px;transform:scaleX(0.8628);transform-origin:left;">MACHINERY</div><div class="t" style="top:855.71px;font-size:31px;line-height:31px;color:#0f0f0f;font-weight:400;right:2552.50px;transform:scaleX(0.9972);transform-origin:right;">1/1/2024</div><div class="t" style="top:855.71px;font-size:31px;line-height:31px;color:#0f0f0f;font-weight:400;left:356.75px;transform:scaleX(0.9452);transform-origin:left;">Depreciation</div><div class="t" style="top:855.71px;font-size:31px;line-height:31px;color:#0f0f0f;font-weight:400;right:2044.00px;transform:scaleX(0.9260);transform-origin:right;">-3,698.00</div><div class="t" style="top:855.71px;font-size:31px;line-height:31px;color:#0f0f0f;font-weight:400;right:1854.00px;transform:scaleX(0.9090);transform-origin:right;">1,661.81</div><div class="t" style="top:855.71px;font-size:31px;line-height:31px;color:#0f0f0f;font-weight:400;left:1137.50px;transform:scaleX(0.8029);transform-origin:left;">TRUE</div><div class="t" style="top:855.71px;font-size:31px;line-height:31px;color:#0f0f0f;font-weight:400;right:1187.50px;transform:scaleX(0.9370);transform-origin:right;">1801</div><div class="t" style="top:855.71px;font-size:31px;line-height:31px;color:#0f0f0f;font-weight:400;left:1721.50px;transform:scaleX(0.9153);transform-origin:left;">FA000080</div><div class="t" style="top:855.71px;font-size:31px;line-height:31px;color:#0f0f0f;font-weight:400;left:1953.50px;transform:scaleX(0.9644);transform-origin:left;">Lift for Furniture</div><div class="t" style="top:855.71px;font-size:31px;line-height:31px;color:#0f0f0f;font-weight:400;left:2237.00px;transform:scaleX(0.8455);transform-origin:left;">TANGIBLE</div><div class="t" style="top:855.71px;font-size:31px;line-height:31px;color:#0f0f0f;font-weight:400;left:2563.50px;transform:scaleX(0.8628);transform-origin:left;">MACHINERY</div><div class="t" style="top:900.26px;font-size:31px;line-height:31px;color:#0f0f0f;font-weight:400;right:2552.50px;">11/30/2024</div><div class="t" style="top:900.26px;font-size:31px;line-height:31px;color:#0f0f0f;font-weight:400;left:356.75px;transform:scaleX(0.9452);transform-origin:left;">Depreciation</div><div class="t" style="top:900.26px;font-size:31px;line-height:31px;color:#0f0f0f;font-weight:400;right:2044.00px;transform:scaleX(0.9394);transform-origin:right;">-676.00</div><div class="t" style="top:900.26px;font-size:31px;line-height:31px;color:#0f0f0f;font-weight:400;right:1854.00px;transform:scaleX(0.9192);transform-origin:right;">985.81</div><div class="t" style="top:900.26px;font-size:31px;line-height:31px;color:#0f0f0f;font-weight:400;left:1137.50px;transform:scaleX(0.8029);transform-origin:left;">TRUE</div><div class="t" style="top:900.26px;font-size:31px;line-height:31px;color:#0f0f0f;font-weight:400;right:1187.50px;transform:scaleX(0.9370);transform-origin:right;">329</div><div class="t" style="top:900.26px;font-size:31px;line-height:31px;color:#0f0f0f;font-weight:400;left:1721.50px;transform:scaleX(0.9153);transform-origin:left;">FA000080</div><div class="t" style="top:900.26px;font-size:31px;line-height:31px;color:#0f0f0f;font-weight:400;left:1953.50px;transform:scaleX(0.9644);transform-origin:left;">Lift for Furniture</div><div class="t" style="top:900.26px;font-size:31px;line-height:31px;color:#0f0f0f;font-weight:400;left:2237.00px;transform:scaleX(0.8455);transform-origin:left;">TANGIBLE</div><div class="t" style="top:900.26px;font-size:31px;line-height:31px;color:#0f0f0f;font-weight:400;left:2563.50px;transform:scaleX(0.8628);transform-origin:left;">MACHINERY</div><div class="t" style="top:944.81px;font-size:31px;line-height:31px;color:#0f0f0f;font-weight:400;right:2552.50px;transform:scaleX(0.9839);transform-origin:right;">12/31/2024</div><div class="t" style="top:944.81px;font-size:31px;line-height:31px;color:#0f0f0f;font-weight:400;left:356.75px;transform:scaleX(0.9452);transform-origin:left;">Depreciation</div><div class="t" style="top:944.81px;font-size:31px;line-height:31px;color:#0f0f0f;font-weight:400;right:2044.00px;transform:scaleX(0.9399);transform-origin:right;">-62.00</div><div class="t" style="top:944.81px;font-size:31px;line-height:31px;color:#0f0f0f;font-weight:400;right:1854.00px;transform:scaleX(0.9192);transform-origin:right;">923.81</div><div class="t" style="top:944.81px;font-size:31px;line-height:31px;color:#0f0f0f;font-weight:400;left:1137.50px;transform:scaleX(0.8029);transform-origin:left;">TRUE</div><div class="t" style="top:944.81px;font-size:31px;line-height:31px;color:#0f0f0f;font-weight:400;right:1187.50px;transform:scaleX(0.9370);transform-origin:right;">30</div><div class="t" style="top:944.81px;font-size:31px;line-height:31px;color:#0f0f0f;font-weight:400;left:1721.50px;transform:scaleX(0.9153);transform-origin:left;">FA000080</div><div class="t" style="top:944.81px;font-size:31px;line-height:31px;color:#0f0f0f;font-weight:400;left:1953.50px;transform:scaleX(0.9644);transform-origin:left;">Lift for Furniture</div><div class="t" style="top:944.81px;font-size:31px;line-height:31px;color:#0f0f0f;font-weight:400;left:2237.00px;transform:scaleX(0.8455);transform-origin:left;">TANGIBLE</div><div class="t" style="top:944.81px;font-size:31px;line-height:31px;color:#0f0f0f;font-weight:400;left:2563.50px;transform:scaleX(0.8628);transform-origin:left;">MACHINERY</div><div class="t" style="top:989.36px;font-size:31px;line-height:31px;color:#0f0f0f;font-weight:400;right:2552.50px;transform:scaleX(0.9972);transform-origin:right;">1/1/2024</div><div class="t" style="top:989.36px;font-size:31px;line-height:31px;color:#0f0f0f;font-weight:400;left:356.75px;transform:scaleX(0.9452);transform-origin:left;">Depreciation</div><div class="t" style="top:989.36px;font-size:31px;line-height:31px;color:#0f0f0f;font-weight:400;right:2044.00px;transform:scaleX(0.9260);transform-origin:right;">-7,864.00</div><div class="t" style="top:989.36px;font-size:31px;line-height:31px;color:#0f0f0f;font-weight:400;right:1854.00px;transform:scaleX(0.9090);transform-origin:right;">1,698.43</div><div class="t" style="top:989.36px;font-size:31px;line-height:31px;color:#0f0f0f;font-weight:400;left:1137.50px;transform:scaleX(0.8029);transform-origin:left;">TRUE</div><div class="t" style="top:989.36px;font-size:31px;line-height:31px;color:#0f0f0f;font-weight:400;right:1187.50px;transform:scaleX(0.9370);transform-origin:right;">1801</div><div class="t" style="top:989.36px;font-size:31px;line-height:31px;color:#0f0f0f;font-weight:400;left:1721.50px;transform:scaleX(0.9153);transform-origin:left;">FA000090</div><div class="t" style="top:989.36px;font-size:31px;line-height:31px;color:#0f0f0f;font-weight:400;left:1953.50px;transform:scaleX(0.9587);transform-origin:left;">Switchboard</div><div class="t" style="top:989.36px;font-size:31px;line-height:31px;color:#0f0f0f;font-weight:400;left:2237.00px;transform:scaleX(0.8455);transform-origin:left;">TANGIBLE</div><div class="t" style="top:989.36px;font-size:31px;line-height:31px;color:#0f0f0f;font-weight:400;left:2563.50px;transform:scaleX(0.8271);transform-origin:left;">TELEPHONE</div><div class="t" style="top:1033.91px;font-size:31px;line-height:31px;color:#0f0f0f;font-weight:400;right:2552.50px;">11/30/2024</div><div class="t" style="top:1033.91px;font-size:31px;line-height:31px;color:#0f0f0f;font-weight:400;left:356.75px;transform:scaleX(0.9452);transform-origin:left;">Depreciation</div><div class="t" style="top:1033.91px;font-size:31px;line-height:31px;color:#0f0f0f;font-weight:400;right:2044.00px;transform:scaleX(0.9260);transform-origin:right;">-1,436.00</div><div class="t" style="top:1033.91px;font-size:31px;line-height:31px;color:#0f0f0f;font-weight:400;right:1854.00px;transform:scaleX(0.9192);transform-origin:right;">262.43</div><div class="t" style="top:1033.91px;font-size:31px;line-height:31px;color:#0f0f0f;font-weight:400;left:1137.50px;transform:scaleX(0.8029);transform-origin:left;">TRUE</div><div class="t" style="top:1033.91px;font-size:31px;line-height:31px;color:#0f0f0f;font-weight:400;right:1187.50px;transform:scaleX(0.9370);transform-origin:right;">329</div><div class="t" style="top:1033.91px;font-size:31px;line-height:31px;color:#0f0f0f;font-weight:400;left:1721.50px;transform:scaleX(0.9153);transform-origin:left;">FA000090</div><div class="t" style="top:1033.91px;font-size:31px;line-height:31px;color:#0f0f0f;font-weight:400;left:1953.50px;transform:scaleX(0.9587);transform-origin:left;">Switchboard</div><div class="t" style="top:1033.91px;font-size:31px;line-height:31px;color:#0f0f0f;font-weight:400;left:2237.00px;transform:scaleX(0.8455);transform-origin:left;">TANGIBLE</div><div class="t" style="top:1033.91px;font-size:31px;line-height:31px;color:#0f0f0f;font-weight:400;left:2563.50px;transform:scaleX(0.8271);transform-origin:left;">TELEPHONE</div><div class="t" style="top:1078.46px;font-size:31px;line-height:31px;color:#0f0f0f;font-weight:400;right:2552.50px;transform:scaleX(0.9839);transform-origin:right;">12/31/2024</div><div class="t" style="top:1078.46px;font-size:31px;line-height:31px;color:#0f0f0f;font-weight:400;left:356.75px;transform:scaleX(0.9452);transform-origin:left;">Depreciation</div><div class="t" style="top:1078.46px;font-size:31px;line-height:31px;color:#0f0f0f;font-weight:400;right:2044.00px;transform:scaleX(0.9394);transform-origin:right;">-131.00</div><div class="t" style="top:1078.46px;font-size:31px;line-height:31px;color:#0f0f0f;font-weight:400;right:1854.00px;transform:scaleX(0.9192);transform-origin:right;">131.43</div><div class="t" style="top:1078.46px;font-size:31px;line-height:31px;color:#0f0f0f;font-weight:400;left:1137.50px;transform:scaleX(0.8029);transform-origin:left;">TRUE</div><div class="t" style="top:1078.46px;font-size:31px;line-height:31px;color:#0f0f0f;font-weight:400;right:1187.50px;transform:scaleX(0.9370);transform-origin:right;">30</div><div class="t" style="top:1078.46px;font-size:31px;line-height:31px;color:#0f0f0f;font-weight:400;left:1721.50px;transform:scaleX(0.9153);transform-origin:left;">FA000090</div><div class="t" style="top:1078.46px;font-size:31px;line-height:31px;color:#0f0f0f;font-weight:400;left:1953.50px;transform:scaleX(0.9587);transform-origin:left;">Switchboard</div><div class="t" style="top:1078.46px;font-size:31px;line-height:31px;color:#0f0f0f;font-weight:400;left:2237.00px;transform:scaleX(0.8455);transform-origin:left;">TANGIBLE</div><div class="t" style="top:1078.46px;font-size:31px;line-height:31px;color:#0f0f0f;font-weight:400;left:2563.50px;transform:scaleX(0.8271);transform-origin:left;">TELEPHONE</div><div class="t" style="top:1123.01px;font-size:31px;line-height:31px;color:#0f0f0f;font-weight:400;right:2552.50px;transform:scaleX(0.9972);transform-origin:right;">1/1/2024</div><div class="t" style="top:1123.01px;font-size:31px;line-height:31px;color:#0f0f0f;font-weight:400;left:356.75px;transform:scaleX(0.9452);transform-origin:left;">Depreciation</div><div class="t" style="top:1123.01px;font-size:31px;line-height:31px;color:#0f0f0f;font-weight:400;right:2044.00px;transform:scaleX(0.9273);transform-origin:right;">-24,428.00</div><div class="t" style="top:1123.01px;font-size:31px;line-height:31px;color:#0f0f0f;font-weight:400;right:1854.00px;transform:scaleX(0.9192);transform-origin:right;">798.88</div><div class="t" style="top:1123.01px;font-size:31px;line-height:31px;color:#0f0f0f;font-weight:400;left:1137.50px;transform:scaleX(0.8029);transform-origin:left;">TRUE</div><div class="t" style="top:1123.01px;font-size:31px;line-height:31px;color:#0f0f0f;font-weight:400;right:1187.50px;transform:scaleX(0.9370);transform-origin:right;">1744</div><div class="t" style="top:1123.01px;font-size:31px;line-height:31px;color:#0f0f0f;font-weight:400;left:1721.50px;transform:scaleX(0.9153);transform-origin:left;">FA000100</div><div class="t" style="top:1123.01px;font-size:31px;line-height:31px;color:#0f0f0f;font-weight:400;left:1953.50px;transform:scaleX(0.9370);transform-origin:left;">Asset for Demo</div><div class="t" style="top:1167.56px;font-size:31px;line-height:31px;color:#0f0f0f;font-weight:400;right:2552.50px;">11/30/2024</div><div class="t" style="top:1167.56px;font-size:31px;line-height:31px;color:#0f0f0f;font-weight:400;left:356.75px;transform:scaleX(0.9452);transform-origin:left;">Depreciation</div><div class="t" style="top:1167.56px;font-size:31px;line-height:31px;color:#0f0f0f;font-weight:400;right:2044.00px;transform:scaleX(0.9394);transform-origin:right;">-798.88</div><div class="t" style="top:1167.56px;font-size:31px;line-height:31px;color:#0f0f0f;font-weight:400;right:1854.00px;transform:scaleX(0.9090);transform-origin:right;">0.00</div><div class="t" style="top:1167.56px;font-size:31px;line-height:31px;color:#0f0f0f;font-weight:400;left:1137.50px;transform:scaleX(0.8029);transform-origin:left;">TRUE</div><div class="t" style="top:1167.56px;font-size:31px;line-height:31px;color:#0f0f0f;font-weight:400;right:1187.50px;transform:scaleX(0.9370);transform-origin:right;">329</div><div class="t" style="top:1167.56px;font-size:31px;line-height:31px;color:#0f0f0f;font-weight:400;left:1721.50px;transform:scaleX(0.9153);transform-origin:left;">FA000100</div><div class="t" style="top:1167.56px;font-size:31px;line-height:31px;color:#0f0f0f;font-weight:400;left:1953.50px;transform:scaleX(0.9370);transform-origin:left;">Asset for Demo</div><div class="t" style="top:1212.11px;font-size:31px;line-height:31px;color:#0f0f0f;font-weight:400;right:2552.50px;transform:scaleX(0.9839);transform-origin:right;">12/31/2024</div><div class="t" style="top:1212.11px;font-size:31px;line-height:31px;color:#0f0f0f;font-weight:400;left:356.75px;transform:scaleX(0.9452);transform-origin:left;">Depreciation</div><div class="t" style="top:1212.11px;font-size:31px;line-height:31px;color:#0f0f0f;font-weight:400;right:2044.00px;transform:scaleX(0.9090);transform-origin:right;">0.00</div><div class="t" style="top:1212.11px;font-size:31px;line-height:31px;color:#0f0f0f;font-weight:400;right:1854.00px;transform:scaleX(0.9090);transform-origin:right;">0.00</div><div class="t" style="top:1212.11px;font-size:31px;line-height:31px;color:#0f0f0f;font-weight:400;left:1137.50px;transform:scaleX(0.8029);transform-origin:left;">TRUE</div><div class="t" style="top:1212.11px;font-size:31px;line-height:31px;color:#0f0f0f;font-weight:400;right:1187.50px;transform:scaleX(0.9370);transform-origin:right;">30</div><div class="t" style="top:1212.11px;font-size:31px;line-height:31px;color:#0f0f0f;font-weight:400;left:1721.50px;transform:scaleX(0.9153);transform-origin:left;">FA000100</div><div class="t" style="top:1212.11px;font-size:31px;line-height:31px;color:#0f0f0f;font-weight:400;left:1953.50px;transform:scaleX(0.9370);transform-origin:left;">Asset for Demo</div></div><div class="r" style="left:2973.50px;top:315.00px;width:25.50px;height:1767.00px;background:#e8e8e8;"></div><svg class="r" style="left:2976.00px;top:324.00px;" width="20.00" height="16.00" viewBox="0 0 20 16" fill="none"><path d="M10 2 L18 13.5 L2 13.5 Z" fill="#8a8a8a" stroke="#8a8a8a" stroke-width="2.5" stroke-linejoin="round"/></svg><div class="r" style="left:2979.20px;top:355.00px;width:11.80px;height:1126.00px;background:#8c8c8c;border-radius:6px;"></div><svg class="r" style="left:2976.00px;top:2032.00px;" width="20.00" height="16.00" viewBox="0 0 20 16" fill="none"><path d="M10 14 L18 2.5 L2 2.5 Z" fill="#8a8a8a" stroke="#8a8a8a" stroke-width="2.5" stroke-linejoin="round"/></svg><div class="r" style="left:0.00px;top:2058.00px;width:2999.00px;height:24.00px;background:#e8e8e8;"></div><svg class="r" style="left:1.00px;top:2061.00px;" width="15.00" height="16.00" viewBox="0 0 15 16" fill="none"><path d="M2 8 L13 1.5 L13 14.5 Z" fill="#8a8a8a" stroke="#8a8a8a" stroke-width="2.5" stroke-linejoin="round"/></svg><div class="r" style="left:31.00px;top:2064.25px;width:781.00px;height:11.50px;background:#8a8a8a;border-radius:6px;"></div><svg class="r" style="left:2948.00px;top:2061.00px;" width="16.00" height="16.00" viewBox="0 0 16 16" fill="none"><path d="M14 8 L3 1.5 L3 14.5 Z" fill="#8a8a8a" stroke="#8a8a8a" stroke-width="2.5" stroke-linejoin="round"/></svg><div class="r" style="left:0.00px;top:2082.00px;width:2998.00px;height:64.00px;background:#f4f4f4;"></div><svg class="r" style="left:15.00px;top:2101.00px;" width="16.00" height="24.00" viewBox="0 0 16 24" fill="none"><path d="M13 2 L3 12 L13 22" stroke="#9a9a9a" stroke-width="2.2" fill="none"/></svg><svg class="r" style="left:81.00px;top:2101.00px;" width="16.00" height="24.00" viewBox="0 0 16 24" fill="none"><path d="M3 2 L13 12 L3 22" stroke="#9a9a9a" stroke-width="2.2" fill="none"/></svg><svg class="r" style="left:140.00px;top:2103.00px;" width="26.00" height="22.00" viewBox="0 0 26 22" fill="none"><path d="M1 2 h24 M1 11 h24 M1 20 h24" stroke="#333" stroke-width="2.4"/></svg><div class="t" style="top:2099.64px;font-size:27.6px;line-height:27.6px;color:#424242;font-weight:400;left:208.00px;transform:scaleX(0.9958);transform-origin:left;">Projected Value</div><div class="t" style="top:2099.64px;font-size:27.6px;line-height:27.6px;color:#424242;font-weight:700;left:440.00px;transform:scaleX(0.9432);transform-origin:left;">FixedAssetData</div><div class="r" style="left:439.00px;top:2140.00px;width:197.00px;height:5.50px;background:#3b6e47;"></div><svg class="r" style="left:673.00px;top:2102.00px;" width="24.00" height="24.00" viewBox="0 0 24 24" fill="none"><path d="M12 1 v22 M1 12 h22" stroke="#333" stroke-width="2.4"/></svg><div class="r" style="left:0.00px;top:2146.00px;width:3708.00px;height:1.50px;background:#dcdcdc;"></div><div class="r" style="left:0.00px;top:2147.50px;width:3708.00px;height:5.50px;background:#ffffff;"></div><div class="r" style="left:2997.50px;top:315.00px;width:1.50px;height:1831.00px;background:#dedede;"></div><div class="r" style="left:2999.50px;top:307.00px;width:708.00px;height:1839.00px;background:#f4f4f4;"></div><div class="r" style="box-sizing:border-box;left:3068px;top:380px;width:550px;height:71.5px;border:1.8px solid #d0d0d0;border-top:none;border-radius:0 0 12px 12px;background:transparent;"></div><div class="r" style="left:3068.00px;top:307.00px;width:552.00px;height:127.00px;background:#f4f4f4;"></div><div class="r" style="left:3433.00px;top:431.00px;width:7.00px;height:6.00px;background:#242424;border-radius:2px;transform:skewX(-30deg);"></div><svg class="r" style="left:3034.00px;top:351.00px;" width="45.00" height="41.00" viewBox="0 0 45 41" fill="none"><defs><linearGradient id="cg1b" x1="0" y1="0" x2="0" y2="1"><stop offset="0" stop-color="#6cbcf8"/><stop offset="0.28" stop-color="#4a86dd"/><stop offset="0.58" stop-color="#70ad78"/><stop offset="0.82" stop-color="#b8c040"/><stop offset="1" stop-color="#f0c93a"/></linearGradient>
<linearGradient id="cg2b" x1="0" y1="0" x2="0" y2="1"><stop offset="0" stop-color="#a45fe8"/><stop offset="0.5" stop-color="#d9608e"/><stop offset="1" stop-color="#efab5c"/></linearGradient>
<linearGradient id="cg3b" x1="0" y1="0" x2="1" y2="1"><stop offset="0" stop-color="#2a35c4"/><stop offset="1" stop-color="#3f86e6"/></linearGradient>
<linearGradient id="cg4b" x1="0" y1="0" x2="1" y2="1"><stop offset="0" stop-color="#f0945a"/><stop offset="1" stop-color="#c5402f"/></linearGradient></defs>
<path d="M24 4 C25 1 27 0 29 0 C31.5 0 33 2 34 5 L35 9 C35.5 10.5 36.5 11.2 38.5 11.2 L23 11.2 L21.5 13 Z" fill="url(#cg3b)"/>
<path d="M10 28.8 H23 L20.5 38 C20 40 19 40.8 17 40.8 C15 40.8 14 39.5 13.5 37.5 L12 32 C11.5 30 11 28.8 10 28.8 Z" fill="url(#cg4b)"/>
<path d="M10 0 H30 C27 0 25.5 2 25 4 L18 26 C17.3 28 16 28.8 14 28.8 H4 C1 28.8 -0.3 26.5 0.3 23.5 L5 6 C6 2 8 0 10 0 Z" fill="url(#cg1b)"/>
<path d="M31 11.2 H41 C44 11.2 45.3 13.5 44.7 16.5 L40 34.5 C39 38.5 37 40.8 34 40.8 H20 C22 40.8 22.8 39 23.3 37 L29 14 C29.5 12 30 11.2 31 11.2 Z" fill="url(#cg2b)"/></svg><div class="t" style="top:352.86px;font-size:34.9px;line-height:34.9px;color:#1a1a1a;font-weight:400;left:3097.00px;transform:scaleX(0.9849);transform-origin:left;">Copilot</div><svg class="r" style="left:3636.00px;top:358.00px;" width="30.00" height="30.00" viewBox="0 0 30 30" fill="none"><path d="M2 2 L28 28 M28 2 L2 28" stroke="#242424" stroke-width="2.4"/></svg><div class="r" style="left:3687.50px;top:430.00px;width:20.00px;height:1306.00px;background:#efefef;border-radius:10px;"></div><div class="r" style="left:3691.00px;top:931.00px;width:13.50px;height:798.00px;background:#666666;border-radius:7px;"></div><div class="r" style="left:3367.50px;top:510.50px;width:284.00px;height:89.00px;background:#d3e8da;border-radius:20px;"></div><div class="t" style="top:542.08px;font-size:29.2px;line-height:29.2px;color:#2e2e2e;font-weight:400;left:3392.00px;transform:scaleX(0.9547);transform-origin:left;">Show data insights</div><div class="r" style="box-sizing:border-box;left:3034.50px;top:620.00px;width:617.50px;height:675.50px;border:1.5px solid #e3e3e3;background:#fff;border-radius:20px;box-shadow:0 1.5px 3px rgba(0,0,0,0.14);"></div><div class="t" style="top:657.26px;font-size:24.5px;line-height:24.5px;color:#424242;font-weight:400;left:3060.90px;transform:scaleX(0.9788);transform-origin:left;">I analyzed data in A1:M28, and here&#x27;s what I found:</div><div class="t" style="top:703.69px;font-size:29.9px;line-height:29.9px;color:#242424;font-weight:700;left:3060.90px;transform:scaleX(0.9481);transform-origin:left;">&#x27;NumberOfDepreciationDays&#x27; by</div><div class="t" style="top:743.19px;font-size:29.9px;line-height:29.9px;color:#242424;font-weight:700;left:3060.90px;transform:scaleX(0.9218);transform-origin:left;">&#x27;GlobalDimension2Code&#x27;</div><div class="t" style="top:789.74px;font-size:26.3px;line-height:26.3px;color:#424242;font-weight:400;left:3060.00px;transform:scaleX(0.9063);transform-origin:left;">Sum of NumberOfDepreciationDays (Thousands)</div><div class="r" style="box-sizing:border-box;left:3060.00px;top:847.50px;width:566.50px;height:285.50px;border:1.5px solid #dedede;background:#fff;border-radius:4px;"></div><div class="r" style="left:3189.20px;top:866.00px;width:1.60px;height:207.00px;background:#e1e1e1;"></div><div class="t" style="top:1093.22px;font-size:21px;line-height:21px;color:#666666;font-weight:400;left:2590.00px;width:1200px;text-align:center;transform:scaleX(0.9370);transform-origin:center;">0</div><div class="r" style="left:3247.77px;top:866.00px;width:1.60px;height:207.00px;background:#e1e1e1;"></div><div class="t" style="top:1093.22px;font-size:21px;line-height:21px;color:#666666;font-weight:400;left:2648.57px;width:1200px;text-align:center;transform:scaleX(0.9370);transform-origin:center;">2</div><div class="r" style="left:3306.34px;top:866.00px;width:1.60px;height:207.00px;background:#e1e1e1;"></div><div class="t" style="top:1093.22px;font-size:21px;line-height:21px;color:#666666;font-weight:400;left:2707.14px;width:1200px;text-align:center;transform:scaleX(0.9370);transform-origin:center;">4</div><div class="r" style="left:3364.91px;top:866.00px;width:1.60px;height:207.00px;background:#e1e1e1;"></div><div class="t" style="top:1093.22px;font-size:21px;line-height:21px;color:#666666;font-weight:400;left:2765.71px;width:1200px;text-align:center;transform:scaleX(0.9370);transform-origin:center;">6</div><div class="r" style="left:3423.48px;top:866.00px;width:1.60px;height:207.00px;background:#e1e1e1;"></div><div class="t" style="top:1093.22px;font-size:21px;line-height:21px;color:#666666;font-weight:400;left:2824.28px;width:1200px;text-align:center;transform:scaleX(0.9370);transform-origin:center;">8</div><div class="r" style="left:3482.05px;top:866.00px;width:1.60px;height:207.00px;background:#e1e1e1;"></div><div class="t" style="top:1093.22px;font-size:21px;line-height:21px;color:#666666;font-weight:400;left:2882.85px;width:1200px;text-align:center;transform:scaleX(0.9370);transform-origin:center;">10</div><div class="r" style="left:3540.62px;top:866.00px;width:1.60px;height:207.00px;background:#e1e1e1;"></div><div class="t" style="top:1093.22px;font-size:21px;line-height:21px;color:#666666;font-weight:400;left:2941.42px;width:1200px;text-align:center;transform:scaleX(0.9370);transform-origin:center;">12</div><div class="r" style="left:3599.19px;top:866.00px;width:1.60px;height:207.00px;background:#e1e1e1;"></div><div class="t" style="top:1093.22px;font-size:21px;line-height:21px;color:#666666;font-weight:400;left:2999.99px;width:1200px;text-align:center;transform:scaleX(0.9370);transform-origin:center;">14</div><div class="r" style="left:3190.00px;top:871.00px;width:376.00px;height:38.40px;background:#d3d4d8;"></div><div class="r" style="left:3190.00px;top:924.60px;width:61.70px;height:37.10px;background:#d3d4d8;"></div><div class="r" style="left:3190.00px;top:975.00px;width:61.70px;height:37.40px;background:#d3d4d8;"></div><div class="r" style="left:3190.00px;top:1025.60px;width:56.00px;height:38.00px;background:#d3d4d8;"></div><div class="t" style="top:933.62px;font-size:21px;line-height:21px;color:#666666;font-weight:400;left:3142.40px;transform:scaleX(0.8868);transform-origin:left;">VW</div><div class="t" style="top:984.22px;font-size:21px;line-height:21px;color:#666666;font-weight:400;left:3102.40px;transform:scaleX(0.8294);transform-origin:left;">TOYOTA</div><div class="t" style="top:1034.72px;font-size:21px;line-height:21px;color:#666666;font-weight:400;left:3075.60px;transform:scaleX(0.8141);transform-origin:left;">MERCEDES</div><div class="r" style="box-sizing:border-box;left:3060.00px;top:1159.50px;width:295.00px;height:46.50px;border:2px solid #cecece;background:#fff;border-radius:7px;"></div><svg class="r" style="left:3083.00px;top:1171.00px;" width="26.00" height="24.00" viewBox="0 0 26 24" fill="none"><path d="M13 1 v22 M2 12 h22" stroke="#242424" stroke-width="2.2"/></svg><div class="t" style="top:1171.48px;font-size:25.9px;line-height:25.9px;color:#242424;font-weight:400;left:3130.50px;transform:scaleX(0.9335);transform-origin:left;">Add to a new sheet</div><div class="r" style="left:3060.00px;top:1219.50px;width:370.00px;height:40.00px;background:#ebebeb;border-radius:7px;"></div><div class="t" style="top:1228.31px;font-size:20.9px;line-height:20.9px;color:#616161;font-weight:400;left:3071.50px;transform:scaleX(0.9742);transform-origin:left;">AI-generated content may be incorrect</div><svg class="r" style="left:3530px;top:1215px" width="95" height="45" viewBox="3530 1215 95 45" fill="none"><path d="M3552.1 1225.6 C3550.2 1225.6 3549.6 1227.3 3548.9 1229.2 C3547.4 1233.5 3546.5 1237.5 3543.5 1239.2 C3540.4 1241 3538.6 1241.9 3539.3 1244.5 L3540.2 1247.3 C3540.7 1248.4 3541.4 1249 3542.9 1249.5 L3553.4 1252.6 C3555.5 1253.2 3557.4 1252 3558.1 1249.6 L3561.2 1238.2 C3561.6 1236.3 3560.4 1235.4 3558.5 1235.4 L3553.4 1235.4 L3554.5 1230.3 C3555 1227.5 3554 1225.6 3552.1 1225.6 Z" stroke="#3d3d3d" stroke-width="1.8" stroke-linejoin="round"/><path d="M3594.5 1230 L3604.8 1227.3 C3608 1226.6 3611 1228.5 3611.8 1231.5 L3613.2 1237.6 C3613.8 1240.2 3612.2 1242 3609.6 1242 L3606.9 1242 C3607.2 1244.5 3607.4 1247.5 3607.1 1249.7 C3606.8 1252.3 3603.8 1253 3603 1250.5 C3601.5 1246.5 3599.5 1240.5 3593.7 1237.8 C3591.8 1236.9 3591.2 1235.8 3591.6 1234 L3592.1 1231.9 C3592.5 1230.7 3593.2 1230.3 3594.5 1230 Z" stroke="#3d3d3d" stroke-width="1.8" stroke-linejoin="round"/></svg><div class="r" style="box-sizing:border-box;left:3034.50px;top:1317.00px;width:617.50px;height:408.00px;border:1.5px solid #e3e3e3;background:#fff;border-radius:20px;box-shadow:0 1.5px 3px rgba(0,0,0,0.14);"></div><div class="t" style="top:1358.84px;font-size:28.9px;line-height:28.9px;color:#242424;font-weight:400;left:3060.00px;transform:scaleX(0.9746);transform-origin:left;">The data insights show the sum of the</div><div class="t" style="top:1399.04px;font-size:28.9px;line-height:28.9px;color:#242424;font-weight:400;left:3060.00px;transform:scaleX(0.9883);transform-origin:left;">number of depreciation days by global</div><div class="t" style="top:1439.24px;font-size:28.9px;line-height:28.9px;color:#242424;font-weight:400;left:3060.00px;transform:scaleX(0.9783);transform-origin:left;">dimension code. For example, the total for</div><div class="t" style="top:1479.44px;font-size:28.9px;line-height:28.9px;color:#242424;font-weight:400;left:3060.00px;transform:scaleX(0.9087);transform-origin:left;">MERCEDES is 1913 days. See the chart</div><div class="t" style="top:1519.64px;font-size:28.9px;line-height:28.9px;color:#242424;font-weight:400;left:3060.00px;transform:scaleX(0.9759);transform-origin:left;">above for more details.</div><div class="r" style="box-sizing:border-box;left:3060.00px;top:1589.00px;width:134.50px;height:46.00px;border:2px solid #cecece;background:#fff;border-radius:7px;"></div><svg class="r" style="left:3082.00px;top:1598.00px;" width="24.00" height="28.00" viewBox="0 0 24 28" fill="none"><rect x="7" y="2" width="14" height="19" rx="3" stroke="#242424" stroke-width="2"/><path d="M3 8 v14 a4 4 0 0 0 4 4 h9" stroke="#242424" stroke-width="2" fill="none"/></svg><div class="t" style="top:1601.48px;font-size:24px;line-height:24px;color:#242424;font-weight:400;left:3122.90px;transform:scaleX(0.9604);transform-origin:left;">Copy</div><div class="r" style="left:3060.00px;top:1649.50px;width:370.00px;height:39.00px;background:#ebebeb;border-radius:7px;"></div><div class="t" style="top:1658.31px;font-size:20.9px;line-height:20.9px;color:#616161;font-weight:400;left:3071.50px;transform:scaleX(0.9742);transform-origin:left;">AI-generated content may be incorrect</div><svg class="r" style="left:3530px;top:1645px" width="95" height="45" viewBox="3530 1215 95 45" fill="none"><path d="M3552.1 1225.6 C3550.2 1225.6 3549.6 1227.3 3548.9 1229.2 C3547.4 1233.5 3546.5 1237.5 3543.5 1239.2 C3540.4 1241 3538.6 1241.9 3539.3 1244.5 L3540.2 1247.3 C3540.7 1248.4 3541.4 1249 3542.9 1249.5 L3553.4 1252.6 C3555.5 1253.2 3557.4 1252 3558.1 1249.6 L3561.2 1238.2 C3561.6 1236.3 3560.4 1235.4 3558.5 1235.4 L3553.4 1235.4 L3554.5 1230.3 C3555 1227.5 3554 1225.6 3552.1 1225.6 Z" stroke="#3d3d3d" stroke-width="1.8" stroke-linejoin="round"/><path d="M3594.5 1230 L3604.8 1227.3 C3608 1226.6 3611 1228.5 3611.8 1231.5 L3613.2 1237.6 C3613.8 1240.2 3612.2 1242 3609.6 1242 L3606.9 1242 C3607.2 1244.5 3607.4 1247.5 3607.1 1249.7 C3606.8 1252.3 3603.8 1253 3603 1250.5 C3601.5 1246.5 3599.5 1240.5 3593.7 1237.8 C3591.8 1236.9 3591.2 1235.8 3591.6 1234 L3592.1 1231.9 C3592.5 1230.7 3593.2 1230.3 3594.5 1230 Z" stroke="#3d3d3d" stroke-width="1.8" stroke-linejoin="round"/></svg><div class="r" style="box-sizing:border-box;left:3057.00px;top:1743.50px;width:312.00px;height:59.50px;border:2px solid #a8d4b4;background:transparent;border-radius:15px;"></div><div class="t" style="top:1761.67px;font-size:25.2px;line-height:25.2px;color:#2b2b2b;font-weight:400;left:3075.00px;transform:scaleX(0.9348);transform-origin:left;">Can I see another insight?</div><div class="r" style="box-sizing:border-box;left:3386.00px;top:1743.50px;width:278.00px;height:59.50px;border:2px solid #a8d4b4;background:transparent;border-radius:15px;"></div><div class="t" style="top:1761.67px;font-size:25.2px;line-height:25.2px;color:#2b2b2b;font-weight:400;left:3404.00px;transform:scaleX(0.9776);transform-origin:left;">Add all insights to grid</div><div class="r" style="box-sizing:border-box;left:3601.00px;top:1821.00px;width:63.00px;height:54.50px;border:2px solid #a8d4b4;background:transparent;border-radius:14px;"></div><svg class="r" style="left:3618.00px;top:1834.00px;" width="30.00" height="30.00" viewBox="0 0 30 30" fill="none"><path d="M23 8 A10 10 0 1 0 25 16" stroke="#242424" stroke-width="2.2" fill="none" stroke-linecap="round"/><path d="M24 3 v6 h-6" stroke="#242424" stroke-width="2.2" fill="none" stroke-linecap="round" stroke-linejoin="round"/></svg><div class="r" style="box-sizing:border-box;left:3036.00px;top:1886.00px;width:636.50px;height:215.50px;border:2px solid #cfcfcf;background:#fff;border-radius:18px;"></div><div class="t" style="top:1918.74px;font-size:28.9px;line-height:28.9px;color:#707070;font-weight:400;left:3053.60px;transform:scaleX(0.9881);transform-origin:left;">Ask a question, or tell me what you&#x27;d like to do</div><div class="t" style="top:1958.84px;font-size:28.9px;line-height:28.9px;color:#707070;font-weight:400;left:3053.66px;transform:scaleX(0.9862);transform-origin:left;">with A1:M28</div><svg class="r" style="left:3440px;top:2025px" width="220" height="65" viewBox="3440 2025 220 65" fill="none"><path d="M3469.7 2041.8 C3470.8 2047 3473.6 2050.6 3480.4 2052.1 C3473.6 2053.6 3470.8 2057.4 3469.7 2062.8 C3468.6 2057.4 3465.8 2053.6 3458.6 2052.1 C3465.8 2050.6 3468.6 2047 3469.7 2041.8 Z" stroke="#3a3a3a" stroke-width="1.9" stroke-linejoin="round"/><path d="M3487.9 2040.8 V2047.6 M3484.5 2044.2 H3491.3 M3461.7 2067 V2073.8 M3458.3 2070.4 H3465.1" stroke="#3a3a3a" stroke-width="1.8" stroke-linecap="round"/><path d="M3484 2051.3 H3486 A5.1 5.1 0 0 1 3491.1 2056.4 V2068 A5 5 0 0 1 3486.1 2073 H3473.8 A5 5 0 0 1 3468.8 2068 V2066.2 M3475.8 2060.3 H3485.9 M3475.8 2065.2 H3482.4" stroke="#3a3a3a" stroke-width="1.9" stroke-linecap="round"/><rect x="3507.9" y="2037.2" width="1.5" height="39.3" fill="#cfcfcf"/><rect x="3544.2" y="2041.4" width="11.4" height="21.4" rx="5.7" stroke="#3a3a3a" stroke-width="1.9"/><path d="M3539.2 2056.6 A10.45 10.45 0 0 0 3560.4 2056.6 M3549.8 2067.6 V2073.4" stroke="#3a3a3a" stroke-width="1.9" stroke-linecap="round"/><path d="M3607.4 2041.8 L3638.2 2057.3 L3607.4 2072.6 L3611.6 2057.3 Z M3611.6 2057.3 H3626.5" stroke="#b9b9b9" stroke-width="1.8" stroke-linejoin="round" stroke-linecap="round"/></svg></body></html>
